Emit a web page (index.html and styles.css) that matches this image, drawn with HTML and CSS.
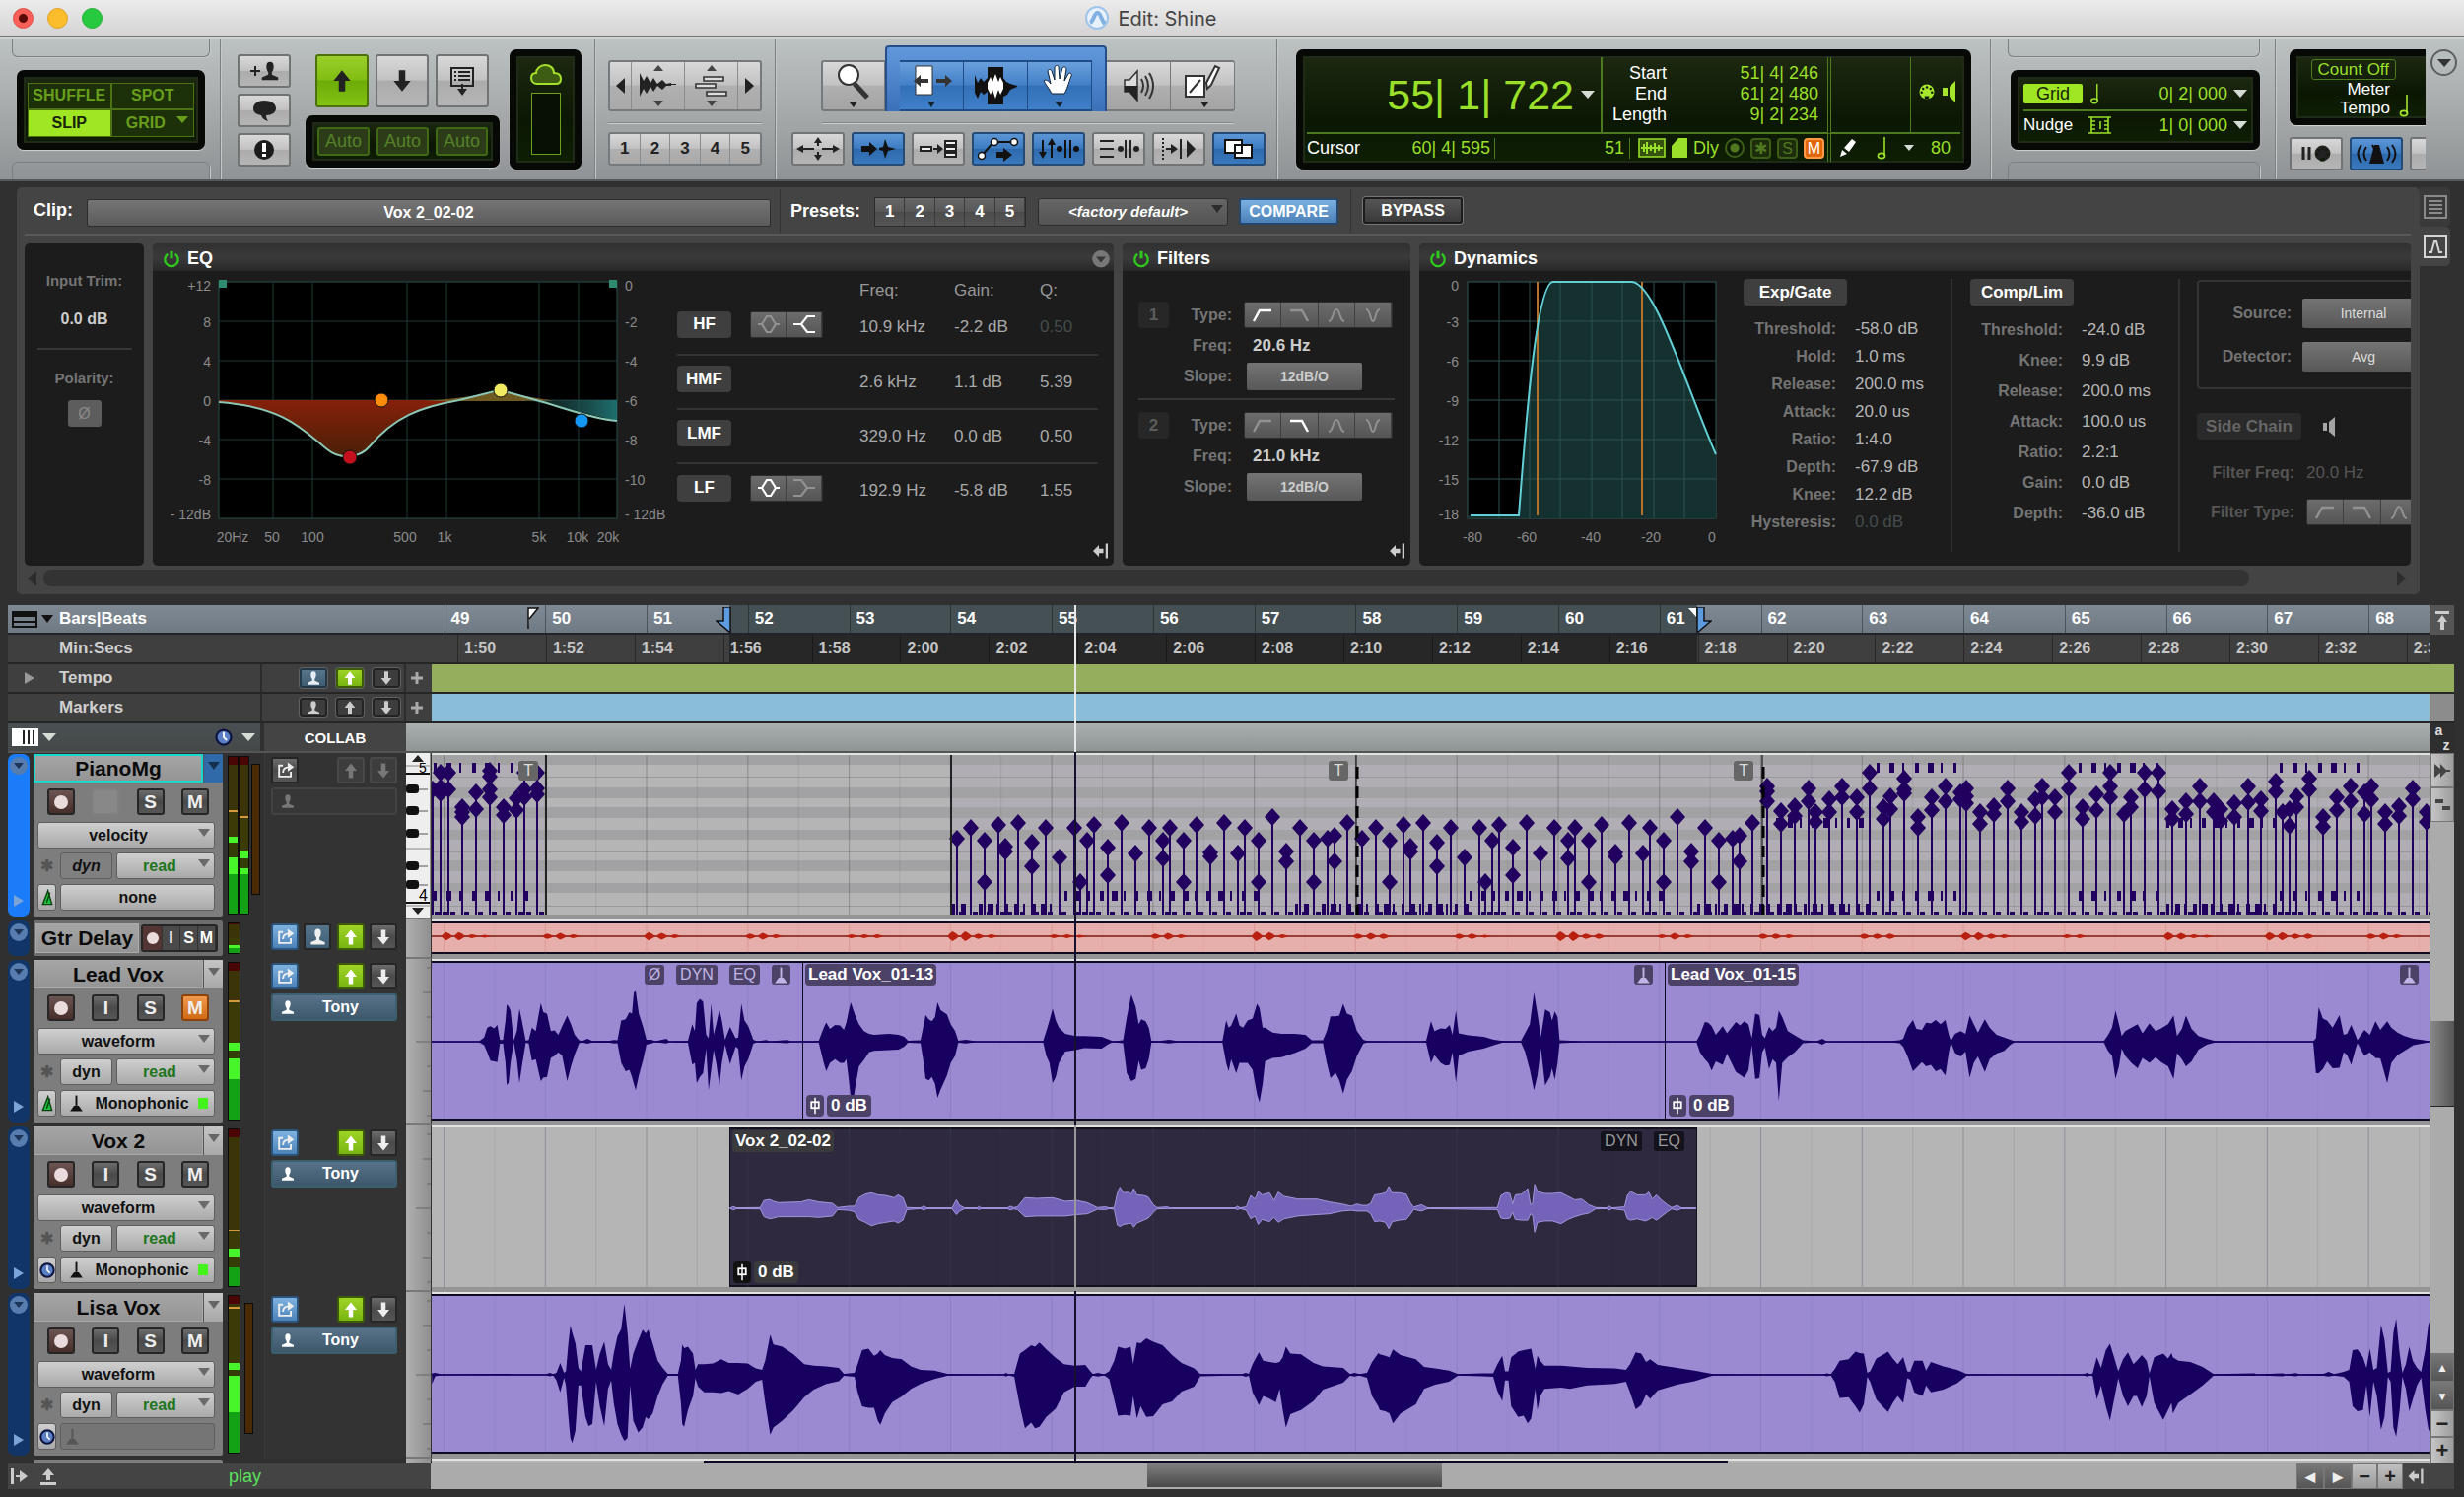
FILE: index.html
```
<!DOCTYPE html>
<html lang="en">
<head>
  <meta charset="UTF-8">
  <meta name="viewport" content="width=device-width, initial-scale=1.0">
  <title>Edit: Shine</title>
  <link rel="stylesheet" href="styles.css">
</head>
<body>
  <!-- shared icons -->
  <svg class="sprite" aria-hidden="true">
    <symbol id="i-person" viewBox="0 0 24 24"><path fill="currentColor" d="M12 2c3 0 4 2 4 5 0 3-1 5-2 6v3l7 3v3H3v-3l7-3v-3c-1-1-2-3-2-6 0-3 1-5 4-5z"/></symbol>
    <symbol id="i-up" viewBox="0 0 24 24"><path fill="currentColor" d="M12 2l8 10h-5v10H9V12H4z"/></symbol>
    <symbol id="i-down" viewBox="0 0 24 24"><path fill="currentColor" d="M12 22l8-10h-5V2H9v10H4z"/></symbol>
    <symbol id="i-share" viewBox="0 0 24 24"><path fill="none" stroke="currentColor" stroke-width="2.4" d="M9 6H4v14h15v-6M9 15c0-5 3-7 8-7"/><path fill="currentColor" d="M15 2l8 6-8 6z"/></symbol>
    <symbol id="i-metro" viewBox="0 0 24 24"><path stroke="currentColor" stroke-width="2.4" d="M12 2v13"/><path fill="currentColor" d="M4 22l5-7h6l5 7z"/></symbol>
    <symbol id="i-clock" viewBox="0 0 24 24"><circle cx="12" cy="12" r="10" fill="#5b7fc4" stroke="#0d1440" stroke-width="3"/><path fill="none" stroke="#fff" stroke-width="2.4" d="M12 5v7l4 4"/></symbol>
    <symbol id="i-tri" viewBox="0 0 24 24"><path fill="#19c23a" stroke="#0b3d14" stroke-width="2" d="M13 1L5 22h14z"/><path stroke="#0b3d14" stroke-width="2" d="M16 4l-5 15"/></symbol>
    <symbol id="i-power" viewBox="0 0 24 24"><path fill="none" stroke="currentColor" stroke-width="3" d="M7 5a9 9 0 1 0 10 0"/><path stroke="currentColor" stroke-width="4" d="M12 1v10"/></symbol>
    <symbol id="i-fader" viewBox="0 0 24 24"><path stroke="currentColor" stroke-width="2" d="M12 1v22"/><rect x="7" y="7" width="10" height="8" fill="none" stroke="currentColor" stroke-width="2.4"/></symbol>
    <symbol id="i-collapse" viewBox="0 0 24 24"><path fill="currentColor" d="M2 12l8-8v5h6v6h-6v5zM19 2h3v20h-3z"/></symbol>
    <symbol id="i-hp" viewBox="0 0 24 16"><path fill="none" stroke="currentColor" stroke-width="2.4" d="M3 14L9 3h12"/></symbol>
    <symbol id="i-lp" viewBox="0 0 24 16"><path fill="none" stroke="currentColor" stroke-width="2.4" d="M3 3h12l6 11"/></symbol>
    <symbol id="i-peak" viewBox="0 0 24 16"><path fill="none" stroke="currentColor" stroke-width="2" d="M4 14c5 0 4-12 8-12s3 12 8 12"/></symbol>
    <symbol id="i-notch" viewBox="0 0 24 16"><path fill="none" stroke="currentColor" stroke-width="2" d="M5 2c5 0 4 12 7 12s2-12 7-12"/></symbol>
    <symbol id="i-bell" viewBox="0 0 24 20"><path fill="none" stroke="currentColor" stroke-width="2.2" d="M1 10h4l5-8h4l5 8h4M5 10l5 8h4l5-8"/></symbol>
    <symbol id="i-shelfr" viewBox="0 0 24 20"><path fill="none" stroke="currentColor" stroke-width="2.2" d="M1 10h8l6-8h8M9 10l6 8h8"/></symbol>
    <symbol id="i-shelfl" viewBox="0 0 24 20"><path fill="none" stroke="currentColor" stroke-width="2.2" d="M1 2h8l6 8h8M1 18h8l6-8"/></symbol>
    <symbol id="i-note" viewBox="0 0 12 24"><path stroke="currentColor" stroke-width="1.6" d="M9 1v19"/><ellipse cx="6" cy="20" rx="3.6" ry="2.6" fill="none" stroke="currentColor" stroke-width="1.6"/></symbol>
    <symbol id="i-midi" viewBox="0 0 24 24"><circle cx="12" cy="12" r="10" fill="currentColor"/><g fill="#101a08"><circle cx="12" cy="6" r="1.6"/><circle cx="7" cy="8" r="1.6"/><circle cx="17" cy="8" r="1.6"/><circle cx="5" cy="13" r="1.6"/><circle cx="19" cy="13" r="1.6"/><rect x="9" y="18" width="6" height="4"/></g></symbol>
  </svg>

  <div class="window">
    <header class="titlebar">
      <div class="lights">
        <button class="light red" aria-label="Close"></button>
        <button class="light yellow" aria-label="Minimize"></button>
        <button class="light green" aria-label="Zoom"></button>
      </div>
      <h1 class="title">
        <svg width="25" height="25" viewBox="0 0 25 25"><circle cx="12" cy="12" r="11" fill="#e8f1fb" stroke="#9fc4ea" stroke-width="2"/><path d="M5 17c4-2 4-10 7.500-10S16 14 20 18" fill="none" stroke="#7fb0e0" stroke-width="4"/></svg>
        Edit: Shine
      </h1>
    </header>

    <div class="toolbar">
      <!-- edit modes -->
      <section class="section modes">
        <div class="tab tab-top"></div>
        <div class="lcd mode-lcd">
          <button>SHUFFLE</button><button>SPOT</button>
          <button class="on">SLIP</button><button>GRID<i class="caret"></i></button>
        </div>
        <div class="tab tab-bottom"></div>
      </section>

      <!-- collaboration -->
      <section class="section cloud">
        <div class="stack">
          <button class="tool" aria-label="Invite"><svg width="34" height="24" viewBox="0 0 34 24"><path stroke="#222" stroke-width="2" d="M3 12h10M8 7v10"/><use href="#i-person" x="12" width="22" height="24"/></svg></button>
          <button class="tool" aria-label="Chat"><svg width="28" height="24" viewBox="0 0 28 24"><path fill="#222" d="M14 2c7 0 12 3 12 8 0 4-4 7-10 7 0 3 1 4 2 6-4-1-6-3-7-6-5-1-8-3-8-7 0-5 5-8 11-8z"/></svg></button>
          <button class="tool" aria-label="Alerts"><svg width="24" height="24" viewBox="0 0 24 24"><circle cx="12" cy="12" r="10" fill="#1b1b1b"/><path stroke="#fff" stroke-width="4" d="M12 5v9M12 16v3"/></svg></button>
        </div>
        <div class="transfer">
          <div class="transfer-row">
            <button class="tool lime" aria-label="Upload"><svg width="26" height="28"><use href="#i-up"/></svg></button>
            <button class="tool" aria-label="Download"><svg width="26" height="28"><use href="#i-down"/></svg></button>
            <button class="tool" aria-label="Download tracks"><svg width="26" height="30" viewBox="0 0 26 30"><rect x="2" y="2" width="22" height="18" fill="none" stroke="#222" stroke-width="2"/><path stroke="#222" stroke-width="2" d="M5 6h2M9 6h12M5 10h2M9 10h12M5 14h2M9 14h12M13 18v7"/><path fill="#222" d="M8 23h10l-5 7z"/></svg></button>
          </div>
          <div class="lcd auto-lcd"><button>Auto</button><button>Auto</button><button>Auto</button></div>
        </div>
        <div class="lcd cloud-lcd">
          <svg width="32" height="22" viewBox="0 0 32 22"><path fill="#3d5d12" stroke="#a6e02c" stroke-width="2" d="M7 20c-4 0-6-3-6-6s2-5 5-5c0-4 4-8 9-8s9 3 9 8c4 0 7 2 7 6 0 3-2 5-5 5z"/></svg>
          <div class="cloud-meter"></div>
        </div>
      </section>

      <!-- zoom -->
      <section class="section zoom">
        <div class="button-bar tall zoom-bar">
          <button aria-label="Zoom out"><i class="arrow-l"></i></button>
          <button aria-label="Audio zoom"><svg width="44" height="46" viewBox="0 0 44 46"><path fill="#444" d="M22 2l5 6H17zM22 44l5-6H17z"/><path fill="#222" d="M3 10l4 8 3-5 4 7 3-5 4 6 5-4 4 4 5-1v1h5v1h-5v1h-5l-4 4-5-4-4 6-3-5-4 7-3-5-4 8z"/></svg></button>
          <button aria-label="MIDI zoom"><svg width="44" height="46" viewBox="0 0 44 46"><path fill="#444" d="M22 2l5 6H17zM22 44l5-6H17z"/><path fill="#ddd" stroke="#333" stroke-width="1.600" d="M14 14h20v4H14zM6 21h20v4H6zM17 29h20v4H17z"/></svg></button>
          <button aria-label="Zoom in"><i class="arrow-r"></i></button>
        </div>
        <div class="groove"></div>
        <div class="button-bar presets">
          <button>1</button><button>2</button><button>3</button><button>4</button><button>5</button>
        </div>
      </section>

      <!-- tools -->
      <section class="section tools">
        <div class="tool-row">
          <button class="cell first" aria-label="Zoomer"><svg width="38" height="46" viewBox="0 0 38 46"><path stroke="#333" stroke-width="5" d="M20 21l13 14"/><circle cx="14" cy="12" r="10" fill="#fff" stroke="#333" stroke-width="2"/><path fill="#222" d="M14 39h9l-4 6z"/></svg></button>
          <div class="smart">
            <button class="cell blue" aria-label="Trim"><svg width="42" height="46" viewBox="0 0 42 46"><path fill="#fff" stroke="#333" d="M5 3h17v29H5z"/><path fill="#333" d="M3 18l7-6v4h8v4h-8v4zM42 18l-7-6v4h-9v4h9v4z"/><path fill="#123" d="M17 39h8l-4 6z"/></svg></button>
            <button class="cell blue" aria-label="Selector"><svg width="46" height="46" viewBox="0 0 46 46"><path fill="#111" d="M15 4h16v38H15zM2 12l3 8 3-5 3 4 4-4v14l-4 3-3-3-3 7-3-6zM31 15l3 4 4 2 7 2v1l-7 3-3 5-4 2z"/><path fill="#fff" d="M15 20l3-6 2 5 3-8 3 8 2-5 3 6v6l-3 6-2-5-3 9-3-9-2 5-3-6z"/></svg></button>
            <button class="cell blue" aria-label="Grabber"><svg width="38" height="46" viewBox="0 0 38 46"><path fill="#fff" stroke="#123" d="M11 31c-3-6-6-9-8-13 2-2 5 0 7 3L7 8c1-2 3-2 4 0l3 9V4c1-2 4-2 4 0l1 12 3-11c1-2 4-1 4 1l-2 12 4-7c2-2 4 0 3 2-3 8-4 13-7 18z"/><path fill="#123" d="M14 39h9l-4 6z"/></svg></button>
          </div>
          <button class="cell" aria-label="Scrubber"><svg width="34" height="40" viewBox="0 0 34 40"><path fill="#ddd" stroke="#333" stroke-width="1.500" d="M3 14h5l8-9v30l-8-9H3z"/><path fill="#222" d="M3 20h13v15l-8-9H3z"/><path fill="none" stroke="#333" stroke-width="2" d="M20 13q4 7 0 14M24 10q6 10 0 20M28 7q8 13 0 26"/></svg></button>
          <button class="cell last" aria-label="Pencil"><svg width="42" height="46" viewBox="0 0 42 46"><path fill="#fff" stroke="#333" stroke-width="2" d="M4 13h19v21H4zM8 30l11-13"/><path fill="#fff" stroke="#333" stroke-width="2" d="M26 26l-1-6 9-17 4 2-8 17z"/><path fill="#222" d="M19 39h9l-5 6z"/></svg></button>
        </div>
        <div class="groove"></div>
        <div class="option-row">
          <button class="tool" aria-label="Zoom toggle"><svg width="46" height="24" viewBox="0 0 46 24"><path stroke="#222" stroke-width="2" d="M6 12h13M27 12h13M23 9V5M23 15v4"/><path fill="#222" d="M1 12l7-4v8zM45 12l-7-4v8zM23 0l4 6h-8zM23 24l4-6h-8z"/></svg></button>
          <button class="tool blue" aria-label="Tab to transient"><svg width="38" height="24" viewBox="0 0 38 24"><path fill="#111" d="M2 9h8V5l8 7-8 7v-4H2zM20 11l4-1 2-8 3 8 8 2-8 2-3 8-2-8-4-1z"/></svg></button>
          <button class="tool" aria-label="Mirrored editing"><svg width="40" height="24" viewBox="0 0 40 24"><path fill="#eee" stroke="#222" stroke-width="2" d="M2 10h11v4H2zM27 4h11v4H27zM27 10h11v4H27zM27 16h11v4H27z"/><path stroke="#222" stroke-width="2" d="M15 12h6"/><path fill="#222" d="M19 7l6 5-6 5z"/></svg></button>
          <button class="tool blue" aria-label="Automation follows edit"><svg width="44" height="26" viewBox="0 0 44 26"><path fill="none" stroke="#111" stroke-width="2" d="M5 20L17 6h22"/><g fill="#fff" stroke="#111" stroke-width="1.500"><circle cx="5" cy="20" r="3.500"/><circle cx="18" cy="6" r="3.500"/><circle cx="38" cy="6" r="3.500"/></g><path fill="#111" d="M20 16h7v-4l9 7-9 7v-4h-7z"/></svg></button>
          <button class="tool blue" aria-label="MIDI merge"><svg width="44" height="24" viewBox="0 0 44 24"><path stroke="#111" stroke-width="2" d="M6 3v14M15 7v14M29 3v18M34 3v18"/><path fill="#111" d="M6 22l-4-7h8zM15 1l-4 7h8z"/><circle cx="23" cy="12" r="3" fill="#111"/><circle cx="40" cy="12" r="3" fill="#111"/></svg></button>
          <button class="tool" aria-label="Link track"><svg width="44" height="24" viewBox="0 0 44 24"><path stroke="#222" stroke-width="2" d="M3 4h14M3 12h14M3 20h14M29 3v18M34 3v18"/><circle cx="24" cy="12" r="3" fill="#222"/><circle cx="40" cy="12" r="3" fill="#222"/></svg></button>
          <button class="tool" aria-label="Insertion follows playback"><svg width="40" height="24" viewBox="0 0 40 24"><path stroke="#222" stroke-width="2" stroke-dasharray="2 2" d="M4 1v22"/><path stroke="#222" stroke-width="2" d="M7 12h7M22 2v20"/><path fill="#222" d="M12 7l7 5-7 5zM28 3l9 9-9 9z"/></svg></button>
          <button class="tool blue" aria-label="Layered editing"><svg width="32" height="24" viewBox="0 0 32 24"><path fill="#fff" stroke="#111" stroke-width="2" d="M2 3h17v13H2zM12 8h17v13H12z"/></svg></button>
        </div>
      </section>

      <!-- main counter -->
      <section class="section counter">
        <div class="lcd counter-lcd">
          <div class="main-time">55| 1| 722<i class="caret white"></i></div>
          <dl class="range">
            <dt>Start</dt><dd>51| 4| 246</dd>
            <dt>End</dt><dd>61| 2| 480</dd>
            <dt>Length</dt><dd>9| 2| 234</dd>
          </dl>
          <div class="inputs">
            <div class="inputs-icons"><svg width="18" height="18"><use href="#i-midi"/></svg><svg width="16" height="24" viewBox="0 0 16 24"><path fill="currentColor" d="M1 8h5v8H1zM8 7l6-6v22l-6-6z"/></svg></div>
          </div>
          <div class="cursor-row">
            <span class="white">Cursor</span>
            <span class="cursor-pos">60| 4| 595</span>
            <span class="cursor-val">51</span>
            <span class="status">
              <svg width="28" height="20" viewBox="0 0 28 20"><path fill="#35520f" stroke="currentColor" stroke-width="1.600" d="M1 1h26v18H1z"/><path stroke="currentColor" stroke-width="2" d="M3 10h22M6 6v8M9 4v12M13 7v6M17 5v10M21 7v6"/></svg>
              <svg width="16" height="20" viewBox="0 0 16 20"><path fill="currentColor" d="M7 0h9v20H0V8z"/></svg>
              <span>Dly</span>
              <i class="dot-ring"></i><i class="chip">✱</i><i class="chip">S</i><i class="chip mute">M</i>
            </span>
          </div>
          <div class="note-row">
            <svg width="20" height="20" viewBox="0 0 20 20"><path fill="#fff" d="M1 19l2-7 5 4zM5 10L13 1l4 3-7 10z"/></svg>
            <svg width="12" height="24"><use href="#i-note"/></svg>
            <i class="caret white small"></i>
            <span>80</span>
          </div>
        </div>
      </section>

      <!-- grid and nudge -->
      <section class="section gridnudge">
        <div class="tab tab-top"></div>
        <div class="lcd grid-lcd">
          <div class="grid-line"><button class="grid-on">Grid</button><svg width="12" height="22"><use href="#i-note"/></svg><span>0| 2| 000</span><i class="caret white"></i></div>
          <div class="grid-line"><b>Nudge</b><svg width="23" height="18" viewBox="0 0 23 18"><path fill="none" stroke="currentColor" stroke-width="1.600" d="M0 1h23M0 17h23M3 1v16M20 1v16M3 5h4M3 9h4M3 13h4M16 5h4M16 9h4M16 13h4M12 5v8"/></svg><span>1| 0| 000</span><i class="caret white"></i></div>
        </div>
        <div class="tab tab-bottom"></div>
      </section>

      <section class="transport">
        <div class="lcd tempo-lcd">
          <span class="count">Count Off</span>
          <span>Meter</span>
          <span>Tempo</span>
          <svg class="tempo-note" width="14" height="24"><use href="#i-note"/></svg>
        </div>
        <div class="transport-row">
          <button class="tool" aria-label="Wait for note"><svg width="32" height="20" viewBox="0 0 32 20"><path stroke="#222" stroke-width="3" d="M3 3v13M9 3v13"/><use href="#i-midi" x="13" width="19" height="19"/></svg></button>
          <button class="tool blue" aria-label="Metronome"><svg width="42" height="24" viewBox="0 0 42 24"><path fill="#111" d="M19 3h5l5 19H14z"/><path fill="none" stroke="#111" stroke-width="2" d="M11 5q-5 7 0 14M6 3q-7 9 0 18M32 5q5 7 0 14M37 3q7 9 0 18M17 3l6 12"/></svg></button>
          <button class="tool" aria-label="Count off"></button>
        </div>
      </section>
      <button class="round" aria-label="Toolbar menu"><i class="caret"></i></button>
    </div>

    <!-- clip effects -->
    <div class="fx">
      <div class="fx-main">
        <div class="fx-top">
          <span class="fx-label">Clip:</span>
          <button class="clip-name">Vox 2_02-02</button>
          <div class="fx-presets">
            <span class="fx-label">Presets:</span>
            <div class="fx-numbers"><button>1</button><button>2</button><button>3</button><button>4</button><button>5</button></div>
            <label class="drop fx-drop"><select aria-label="Preset"><option>&lt;factory default&gt;</option></select></label>
            <button class="compare">COMPARE</button>
          </div>
          <button class="bypass">BYPASS</button>
        </div>

        <div class="fx-panels">
          <section class="panel trim">
            <span class="dim">Input Trim:</span>
            <b>0.0 dB</b>
            <hr>
            <span class="dim">Polarity:</span>
            <button class="polarity">Ø</button>
          </section>

          <section class="panel eq">
            <h2><svg width="18" height="18"><use href="#i-power"/></svg>EQ<i class="round-mini"></i></h2>
            <div class="eq-body">
              <svg class="eq-graph" id="eqGraph" width="520" height="286" viewBox="0 0 520 286"></svg>
              <table class="bands">
                <thead><tr><th></th><th></th><th>Freq:</th><th>Gain:</th><th>Q:</th></tr></thead>
                <tbody>
                  <tr><td><button class="band">HF</button></td><td><div class="shape"><button aria-label="Bell"><svg width="24" height="20"><use href="#i-bell"/></svg></button><button class="on" aria-label="Shelf"><svg width="24" height="20"><use href="#i-shelfr"/></svg></button></div></td><td>10.9 kHz</td><td>-2.2 dB</td><td class="off">0.50</td></tr>
                  <tr><td><button class="band">HMF</button></td><td></td><td>2.6 kHz</td><td>1.1 dB</td><td>5.39</td></tr>
                  <tr><td><button class="band">LMF</button></td><td></td><td>329.0 Hz</td><td>0.0 dB</td><td>0.50</td></tr>
                  <tr><td><button class="band">LF</button></td><td><div class="shape"><button class="on" aria-label="Bell"><svg width="24" height="20"><use href="#i-bell"/></svg></button><button aria-label="Shelf"><svg width="24" height="20"><use href="#i-shelfl"/></svg></button></div></td><td>192.9 Hz</td><td>-5.8 dB</td><td>1.55</td></tr>
                </tbody>
              </table>
            </div>
            <svg class="collapse" width="19" height="18"><use href="#i-collapse"/></svg>
          </section>

          <section class="panel filters">
            <h2><svg width="18" height="18"><use href="#i-power"/></svg>Filters</h2>
            <div class="filter">
              <button class="num">1</button>
              <span class="dim">Type:</span>
              <div class="shape four"><button class="on" aria-label="High pass"><svg width="24" height="16"><use href="#i-hp"/></svg></button><button aria-label="Low pass"><svg width="24" height="16"><use href="#i-lp"/></svg></button><button aria-label="Peak"><svg width="24" height="16"><use href="#i-peak"/></svg></button><button aria-label="Notch"><svg width="24" height="16"><use href="#i-notch"/></svg></button></div>
              <span class="dim">Freq:</span><b>20.6 Hz</b>
              <span class="dim">Slope:</span><button class="slope">12dB/O</button>
            </div>
            <div class="filter">
              <button class="num">2</button>
              <span class="dim">Type:</span>
              <div class="shape four"><button aria-label="High pass"><svg width="24" height="16"><use href="#i-hp"/></svg></button><button class="on" aria-label="Low pass"><svg width="24" height="16"><use href="#i-lp"/></svg></button><button aria-label="Peak"><svg width="24" height="16"><use href="#i-peak"/></svg></button><button aria-label="Notch"><svg width="24" height="16"><use href="#i-notch"/></svg></button></div>
              <span class="dim">Freq:</span><b>21.0 kHz</b>
              <span class="dim">Slope:</span><button class="slope">12dB/O</button>
            </div>
            <svg class="collapse" width="19" height="18"><use href="#i-collapse"/></svg>
          </section>

          <section class="panel dynamics">
            <h2><svg width="18" height="18"><use href="#i-power"/></svg>Dynamics</h2>
            <div class="dyn-body">
              <svg class="dyn-graph" id="dynGraph" width="310" height="286" viewBox="0 0 310 286"></svg>
              <div class="dyn-col">
                <button class="band wide">Exp/Gate</button>
                <dl class="params">
                  <dt>Threshold:</dt><dd>-58.0 dB</dd><dt>Hold:</dt><dd>1.0 ms</dd>
                  <dt>Release:</dt><dd>200.0 ms</dd><dt>Attack:</dt><dd>20.0 us</dd>
                  <dt>Ratio:</dt><dd>1:4.0</dd><dt>Depth:</dt><dd>-67.9 dB</dd>
                  <dt>Knee:</dt><dd>12.2 dB</dd><dt>Hysteresis:</dt><dd class="off">0.0 dB</dd>
                </dl>
              </div>
              <div class="dyn-col">
                <button class="band wide">Comp/Lim</button>
                <dl class="params loose">
                  <dt>Threshold:</dt><dd>-24.0 dB</dd><dt>Knee:</dt><dd>9.9 dB</dd>
                  <dt>Release:</dt><dd>200.0 ms</dd><dt>Attack:</dt><dd>100.0 us</dd>
                  <dt>Ratio:</dt><dd>2.2:1</dd><dt>Gain:</dt><dd>0.0 dB</dd>
                  <dt>Depth:</dt><dd>-36.0 dB</dd>
                </dl>
              </div>
              <div class="side-chain">
                <div class="source">
                  <span class="dim">Source:</span><button class="slope">Internal</button>
                  <span class="dim">Detector:</span><button class="slope">Avg</button>
                </div>
                <div class="chain-line"><button class="chain">Side Chain</button><svg width="16" height="20" viewBox="0 0 16 20"><path fill="#a5a5a5" d="M1 6h4v8H1zM7 5l6-5v20l-6-5z"/></svg></div>
                <div class="chain-grid">
                  <span class="faint">Filter Freq:</span><span class="faint val">20.0 Hz</span>
                  <span class="faint">Filter Type:</span>
                  <div class="shape four"><button aria-label="High pass"><svg width="24" height="16"><use href="#i-hp"/></svg></button><button aria-label="Low pass"><svg width="24" height="16"><use href="#i-lp"/></svg></button><button aria-label="Peak"><svg width="24" height="16"><use href="#i-peak"/></svg></button><button aria-label="Notch"><svg width="24" height="16"><use href="#i-notch"/></svg></button></div>
                </div>
              </div>
            </div>
          </section>
        </div>
        <div class="fx-scroll"><i class="arrow-l"></i><div class="fx-track"><div class="fx-thumb"></div></div><i class="arrow-r"></i></div>
      </div>
      <div class="fx-tabs">
        <button aria-label="List view"><svg width="24" height="24" viewBox="0 0 24 24"><path fill="none" stroke="#8a8a8a" stroke-width="2" d="M1 1h22v22H1zM5 6h14M5 10h14M5 14h14M5 18h14"/></svg></button>
        <button class="on" aria-label="Graph view"><svg width="24" height="24" viewBox="0 0 24 24"><path fill="none" stroke="#d5d5d5" stroke-width="2" d="M1 1h22v22H1zM5 18h3l3-11h2l3 11h3"/></svg></button>
      </div>
    </div>

    <!-- edit window -->
    <main class="edit">
      <div class="edit-main">
        <div class="ruler bars">
          <div class="ruler-name"><svg width="26" height="17" viewBox="0 0 26 17"><path fill="none" stroke="#111" stroke-width="2" d="M1 1h24v15H1zM1 11h24"/><path fill="#111" d="M1 1h24v5H1z"/></svg><i class="caret black"></i><span>Bars|Beats</span></div>
          <div class="ruler-line" id="barRuler"></div>
        </div>
        <div class="ruler secs">
          <div class="ruler-name"><span>Min:Secs</span></div>
          <div class="ruler-line" id="timeRuler"></div>
        </div>
        <div class="ruler lined">
          <div class="ruler-name"><i class="arrow-r gray"></i><span>Tempo</span></div>
          <div class="ruler-collab">
            <button class="mini steel" aria-label="Owner"><svg width="18" height="16"><use href="#i-person"/></svg></button>
            <button class="mini lime" aria-label="Upload"><svg width="18" height="16"><use href="#i-up"/></svg></button>
            <button class="mini" aria-label="Download"><svg width="18" height="16"><use href="#i-down"/></svg></button>
          </div>
          <button class="plus" aria-label="Add tempo"><svg width="12" height="12" viewBox="0 0 12 12"><path stroke="currentColor" stroke-width="3" d="M6 0v12M0 6h12"/></svg></button>
          <div class="ruler-line tempo"></div>
        </div>
        <div class="ruler lined">
          <div class="ruler-name"><span>Markers</span></div>
          <div class="ruler-collab">
            <button class="mini" aria-label="Owner"><svg width="18" height="16"><use href="#i-person"/></svg></button>
            <button class="mini" aria-label="Upload"><svg width="18" height="16"><use href="#i-up"/></svg></button>
            <button class="mini" aria-label="Download"><svg width="18" height="16"><use href="#i-down"/></svg></button>
          </div>
          <button class="plus" aria-label="Add marker"><svg width="12" height="12" viewBox="0 0 12 12"><path stroke="currentColor" stroke-width="3" d="M6 0v12M0 6h12"/></svg></button>
          <div class="ruler-line markers"></div>
        </div>
        <div class="ruler heads">
          <div class="ruler-name"><svg width="27" height="18" viewBox="0 0 27 18"><path fill="#fff" d="M0 0h27v18H0z"/><path stroke="#222" stroke-width="2" d="M12 2v14M17 2v14M22 2v14"/></svg><i class="caret white"></i><span class="grow"></span><svg width="18" height="18"><use href="#i-clock"/></svg><i class="caret white"></i></div>
          <div class="collab-head">COLLAB</div>
          <div class="ruler-line" id="headLine"></div>
        </div>
        <div class="tracks" id="tracks"></div>
        <div class="overlay"><div class="playhead" id="playhead"></div></div>
      </div>

      <aside class="side">
        <div class="side-top"><svg width="20" height="22" viewBox="0 0 20 22"><path fill="#ccc" d="M3 1h14v3H3zM10 5l5 7h-3v8H8v-8H5z"/></svg></div>
        <div class="side-gap"></div>
        <div class="side-tempo"></div>
        <div class="side-markers"></div>
        <button class="az"><span>a</span><span>z</span></button>
        <button class="side-btn" aria-label="Audio zoom"><svg width="18" height="18" viewBox="0 0 18 18"><path fill="#444" d="M1 2l6 5V2l6 6h4v2h-4l-6 6v-5l-6 5z"/></svg></button>
        <button class="side-btn" aria-label="MIDI zoom"><svg width="18" height="18" viewBox="0 0 18 18"><path fill="#444" d="M2 3h8v4H2zM9 10h8v4H9z"/></svg></button>
        <div class="v-scroll"><div class="v-thumb"></div></div>
        <button class="side-btn dark" aria-label="Scroll up">▲</button>
        <button class="side-btn dark" aria-label="Scroll down">▼</button>
        <button class="side-btn pm">−</button>
        <button class="side-btn pm">+</button>
      </aside>
    </main>

    <footer class="bottom">
      <div class="bottom-left">
        <svg width="17" height="16" viewBox="0 0 17 16"><path fill="#ccc" d="M0 0h3v16H0zM5 7h4V2l8 6-8 6V9H5z"/></svg>
        <svg width="16" height="17" viewBox="0 0 16 17"><path fill="#ccc" d="M8 0l6 7h-4v5H6V7H2zM0 14h16v3H0z"/></svg>
        <span class="play">play</span>
      </div>
      <div class="h-scroll"><div class="h-thumb"></div></div>
      <div class="h-buttons">
        <button class="dark" aria-label="Scroll left">◀</button><button class="dark" aria-label="Scroll right">▶</button><button>−</button><button>+</button>
        <svg width="18" height="18"><use href="#i-collapse"/></svg>
      </div>
    </footer>
  </div>
  <script src="script.js"></script>
</body>
</html>
```

FILE: styles.css
```
* {
  box-sizing: border-box;
}
body {
  margin: 0;
  background: #303030;
  color: #ddd;
  font-family: "Liberation Sans", Arial, sans-serif;
  font-size: 16px;
}
button, select {
  font: inherit;
  color: inherit;
  margin: 0;
  padding: 0;
  border: none;
  background: none;
  cursor: pointer;
}
button {
  display: flex;
  align-items: center;
  justify-content: center;
}
svg {
  display: block;
  flex: none;
}
h1, h2, dl, dd {
  margin: 0;
}
.sprite {
  position: absolute;
  width: 0;
  height: 0;
}
.window {
  display: flex;
  flex-direction: column;
  min-height: 100vh;
  background: #303030;
}
/* Triangles */
.caret {
  flex: none;
  border: 7px solid transparent;
  border-top: 8px solid #79b31a;
  border-bottom: none;
}
.caret.white { border-top-color: #d5dcd5; }
.caret.black { border-top-color: #111; }
.caret.small { border-width: 6px 5px 0; }
.arrow-l, .arrow-r {
  flex: none;
  border: 8px solid transparent;
}
.arrow-l { border-right: 9px solid #222; border-left: none; }
.arrow-r { border-left: 9px solid #222; border-right: none; }
.arrow-r.gray { border-width: 6px 0 6px 10px; border-left-color: #999; }

/* Title bar */
.titlebar {
  position: relative;
  display: flex;
  align-items: center;
  justify-content: center;
  height: 38px;
  background: linear-gradient(#ececec, #d3d3d3);
  border-bottom: 1px solid #777;
}
.lights {
  position: absolute;
  left: 13px;
  top: 8px;
  display: flex;
  gap: 14px;
}
.light {
  width: 21px;
  height: 21px;
  border-radius: 50%;
}
.light.red { background: radial-gradient(#5c0b06 0 4px, #fb5f57 5px); border: 1px solid #dd4b44; }
.light.yellow { background: #fcbd2d; border: 1px solid #dfa023; }
.light.green { background: #27c93f; border: 1px solid #1faf34; }
.title {
  display: flex;
  align-items: center;
  gap: 8px;
  padding-right: 164px;
  font: 20px Inter, sans-serif;
  color: #444;
}

/* Toolbar */
.toolbar {
  display: flex;
  height: 146px;
  background: linear-gradient(#bcc1c1, #a9adae 45%, #8f9395);
  border-top: 2px solid #cdd1d2;
  border-bottom: 2px solid #55585c;
  overflow: hidden;
}
.section {
  flex: none;
  border-right: 1px solid #7b8082;
  box-shadow: 1px 0 #c4c8c9;
}
.lcd {
  background: linear-gradient(#1c280f, #0b1703 60%, #0e1f04);
  border: 7px solid #070907;
  border-radius: 7px;
  box-shadow: inset 0 0 0 2px #1f2a17, 0 1px 1px #d0d4d4;
  color: #9adf2a;
}
.tool {
  width: 54px;
  height: 34px;
  background: linear-gradient(#d8d8d8, #c2c2c2 48%, #acacac 50%, #b5b5b5);
  border: 2px solid #717375;
  border-radius: 3px;
  color: #222;
}
.tool.lime { background: linear-gradient(#9bce2b, #80bd12 48%, #6dab07 50%, #82c313); border-color: #4c720e; color: #222; }
.tool.blue { background: linear-gradient(#5c96d6, #3d7cc2 48%, #2d69ad 50%, #3a79bd); border-color: #244a75; }
.groove {
  height: 2px;
  margin: 11px 0 8px;
  background: #83888a;
  border-bottom: 1px solid #c9cdce;
}
.modes {
  display: flex;
  flex-direction: column;
  justify-content: space-between;
  width: 224px;
  padding: 0 10px 0 12px;
}
.tab {
  height: 18px;
  border: 1px solid #7b8082;
  box-shadow: 1px 1px #c4c8c9;
}
.tab-top { border-top: none; border-radius: 0 0 6px 6px; }
.tab-bottom { border-bottom: none; border-radius: 6px 6px 0 0; }
.mode-lcd {
  display: grid;
  grid-template-columns: 1fr 1fr;
  height: 81px;
  margin: 0 5px;
  padding: 6px 4px;
  font-weight: bold;
}
.mode-lcd button {
  position: relative;
  border: 1px solid #4c7213;
  background: #1c3009;
  color: #699e1d;
}
.mode-lcd button:last-child { padding-right: 14px; }
.mode-lcd .on { background: #a0e622; color: #17240a; }
.mode-lcd .caret {
  position: absolute;
  right: 5px;
  top: 6px;
  border-width: 7px 6px 0;
  border-top-color: #699e1d;
}
.cloud {
  display: flex;
  align-items: flex-start;
  width: 380px;
  padding: 10px 0 0 17px;
}
.stack {
  display: flex;
  flex-direction: column;
  gap: 6px;
  padding-top: 5px;
  margin-right: 15px;
}
.transfer-row {
  display: flex;
  gap: 7px;
  padding: 5px 10px 8px;
}
.transfer-row .tool { height: 54px; }
.auto-lcd {
  display: flex;
  gap: 7px;
  height: 53px;
  width: 197px;
  padding: 5px;
}
.auto-lcd button {
  flex: 1;
  background: #2c3c19;
  border: 2px solid #3f6a13;
  border-radius: 3px;
  color: #56812a;
  font-size: 18px;
}
.cloud-lcd {
  display: flex;
  flex-direction: column;
  align-items: center;
  gap: 7px;
  width: 73px;
  height: 122px;
  margin-left: 10px;
  padding: 8px;
}
.cloud-meter {
  width: 30px;
  flex: 1;
  border: 1px solid #6fa01c;
  background: #071003;
}
.zoom {
  width: 183px;
  padding: 21px 13px 0;
}
.button-bar {
  display: flex;
  background: linear-gradient(#d8d8d8, #c2c2c2 48%, #b0b0b0 50%, #a9a9a9);
  border: 2px solid #777a7c;
  border-radius: 3px;
}
.button-bar button {
  flex: 1;
  border-right: 1px solid #8b8e90;
  color: #222;
}
.button-bar button:last-child { border-right: none; }
.tall { height: 52px; }
.zoom-bar button:first-child, .zoom-bar button:last-child { flex: 0 0 22px; }
.presets {
  height: 34px;
  font-size: 17px;
  font-weight: bold;
}
.tools {
  display: flex;
  flex-direction: column;
  align-items: center;
  width: 509px;
  padding: 21px 0 0 4px;
}
.tools .groove { width: 418px; }
.tool-row, .option-row {
  display: flex;
}
.option-row { gap: 7px; }
.cell {
  width: 65px;
  height: 52px;
  background: linear-gradient(#d8d8d8, #c2c2c2 48%, #b0b0b0 50%, #a3a3a3);
  border: solid #777a7c;
  border-width: 2px 1px 2px 0;
}
.cell.first { border-left-width: 2px; border-radius: 3px 0 0 3px; }
.cell.last { border-radius: 0 3px 3px 0; }
.cell.blue {
  background: linear-gradient(#6aa0dc, #4380c8 48%, #326fb6 50%, #4080c8);
  border-color: #1f4c86;
}
.smart {
  display: flex;
  margin-top: -15px;
  padding: 13px 13px 0;
  background: linear-gradient(#6298db, #3a70b8);
  border: solid #27508a;
  border-width: 2px 2px 0;
  border-radius: 4px 4px 0 0;
}
.counter {
  flex: 1;
  padding: 10px 19px 0;
}
.counter-lcd {
  display: grid;
  grid-template: 78px 28px / 1fr 232px 131px;
  height: 122px;
  padding: 1px 4px;
  font-size: 18px;
}
.main-time {
  display: flex;
  align-items: center;
  justify-content: flex-end;
  gap: 7px;
  padding-right: 6px;
  border-right: 2px solid #4d7a1e;
  border-bottom: 2px solid #4d7a1e;
  font-size: 43px;
}
.main-time .caret { border-width: 8px 7px 0; }
.range {
  display: grid;
  grid-template-columns: 65px 1fr;
  grid-auto-rows: 21px;
  padding: 6px 9px 0 0;
  text-align: right;
  line-height: 21px;
  border-right: 4px double #4d7a1e;
  border-bottom: 2px solid #4d7a1e;
}
.range dt, .white {
  color: #fff;
}
.inputs {
  display: flex;
  justify-content: flex-end;
  border-bottom: 2px solid #4d7a1e;
}
.inputs-icons {
  display: flex;
  align-items: center;
  gap: 6px;
  padding: 0 3px 6px 7px;
  border-left: 1px solid #4d7a1e;
  color: #a6e62c;
}
.cursor-row {
  grid-column: 1 / 3;
  display: flex;
  align-items: center;
  border-right: 4px double #4d7a1e;
}
.cursor-pos {
  flex: 1;
  padding-right: 4px;
  border-right: 1px solid #4d7a1e;
  text-align: right;
}
.cursor-val {
  width: 137px;
  padding-right: 5px;
  border-right: 1px solid #4d7a1e;
  text-align: right;
}
.status {
  display: flex;
  align-items: center;
  gap: 6px;
  width: 200px;
  padding-left: 8px;
}
.dot-ring {
  width: 20px;
  height: 20px;
  border: 2px solid #3d5e17;
  border-radius: 50%;
  background: radial-gradient(#50781f 0 4px, transparent 5px);
}
.chip {
  width: 21px;
  height: 21px;
  border: 2px solid #3d5e17;
  border-radius: 4px;
  background: #1d2d0c;
  color: #507822;
  font-size: 16px;
  font-style: normal;
  line-height: 17px;
  text-align: center;
}
.chip.mute { background: #e2660a; border-color: #ff9a45; color: #fff; }
.note-row {
  display: flex;
  align-items: center;
  justify-content: space-between;
  padding: 0 10px 0 8px;
}
.gridnudge {
  display: flex;
  flex-direction: column;
  justify-content: space-between;
  width: 289px;
  padding: 0 15px 0 17px;
}
.grid-lcd {
  height: 81px;
  margin: 0 0 0 3px;
  padding: 2px 6px;
  font-size: 18px;
}
.grid-line {
  display: flex;
  align-items: center;
  gap: 6px;
  height: 31px;
}
.grid-line + .grid-line { border-top: 2px solid #4d7a1e; }
.grid-line span { flex: 1; text-align: right; }
.grid-line b { width: 60px; color: #fff; font-size: 17px; font-weight: normal; }
.grid-on {
  width: 60px;
  height: 20px;
  border-radius: 2px;
  background: #a0e622;
  color: #17240a;
}
.transport {
  flex: none;
  width: 152px;
  padding: 10px 0 0 14px;
  overflow: hidden;
}
.tempo-lcd {
  position: relative;
  display: flex;
  flex-direction: column;
  align-items: flex-end;
  width: 150px;
  height: 77px;
  padding: 3px 41px 0 0;
  color: #fff;
  font-size: 17px;
  line-height: 19px;
}
.count {
  margin-right: -6px;
  padding: 0 6px;
  border: 1px solid #4d7a1e;
  border-radius: 3px;
  color: #9adf2a;
}
.tempo-note {
  position: absolute;
  right: 20px;
  bottom: 1px;
  color: #a6e62c;
}
.transport-row {
  display: flex;
  gap: 7px;
  margin-top: 12px;
}
.transport-row .tool { flex: none; }
.round {
  width: 27px;
  height: 27px;
  margin: 10px 7px 0 5px;
  border: 2px solid #5c6062;
  border-radius: 50%;
}
.round .caret { border-top-color: #333; }

/* Clip effects */
.fx {
  display: flex;
  align-items: flex-start;
  padding: 6px 0 11px 17px;
}
.fx-main {
  flex: 1;
  min-width: 0;
  padding: 0 9px 4px 8px;
  background: #444;
  border-radius: 5px;
}
.fx-top {
  display: flex;
  align-items: center;
  height: 49px;
  padding: 0 0 0 9px;
  border-bottom: 2px solid #595959;
}
.fx-label {
  color: #fff;
  font-size: 18px;
  font-weight: bold;
}
.clip-name {
  width: 694px;
  height: 28px;
  margin: 4px 9px 0 14px;
  background: linear-gradient(#747474, #5c5c5c);
  border: 1px solid #2c2c2c;
  border-radius: 2px;
  color: #fff;
  font-weight: bold;
}
.fx-presets {
  display: flex;
  align-items: center;
  height: 44px;
  padding: 2px 12px 0 10px;
  border: solid #333;
  border-width: 0 1px;
}
.fx-numbers {
  display: flex;
  width: 154px;
  height: 30px;
  margin: 0 12px 0 14px;
  background: linear-gradient(#666, #585858 48%, #4c4c4c 50%, #555);
  border: 1px solid #2c2c2c;
}
.fx-numbers button {
  flex: 1;
  border-right: 1px solid #3b3b3b;
  color: #fff;
  font-size: 17px;
  font-weight: bold;
}
.drop {
  position: relative;
  display: block;
}
.drop::after {
  content: "";
  position: absolute;
  right: 4px;
  top: 6px;
  border: solid transparent;
  border-width: 8px 6px 0;
  border-top-color: #6a6a6a;
}
.drop select {
  width: 100%;
  height: 100%;
  appearance: none;
  text-align: center;
  text-align-last: center;
}
.fx-drop {
  width: 193px;
  height: 28px;
  margin-right: 11px;
  padding-right: 10px;
  background: linear-gradient(#666, #545454);
  border: 1px solid #2c2c2c;
  border-radius: 3px;
  color: #fff;
  font-size: 15px;
  font-style: italic;
  font-weight: bold;
}
.fx-drop::after { border-top-color: #2d2d2d; }
.compare, .bypass {
  width: 101px;
  height: 27px;
  background: linear-gradient(#7bb0e2, #4b80b8);
  border: 2px solid #24486e;
  border-radius: 3px;
  color: #fff;
  font-size: 16px;
  font-weight: bold;
}
.bypass {
  margin-left: 12px;
  background: linear-gradient(#555, #3a3a3a);
  border-color: #1c1c1c;
  box-shadow: 0 0 0 1px #777;
}
.fx-panels {
  display: flex;
  gap: 9px;
  height: 335px;
  padding-top: 8px;
}
.panel {
  position: relative;
  background: #1c1c1c;
  border-radius: 5px;
  font-size: 17px;
  color: #b5b5b5;
}
.panel h2 {
  display: flex;
  align-items: center;
  gap: 7px;
  height: 28px;
  padding: 3px 10px 0;
  background: linear-gradient(#303030, #3a3a3a 50%, #282828);
  border-radius: 5px 5px 0 0;
  color: #fff;
  font-size: 18px;
}
.panel h2 svg { color: #2ecb1c; }
.panel b { color: #ccc; }
.dim {
  color: #747474;
  font-weight: bold;
  font-size: 16px;
}
.faint { color: #555; font-weight: bold; font-size: 16px; }
.faint.val { font-weight: normal; font-size: 17px; }
.off { color: #454c4c; }
.trim {
  display: flex;
  flex-direction: column;
  align-items: center;
  width: 121px;
  padding-top: 29px;
  flex: none;
  font-size: 16px;
}
.trim .dim { font-size: 15px; }
.trim b { margin-top: 22px; }
.trim hr {
  width: 96px;
  margin: 20px 0 20px;
  border: none;
  border-top: 2px solid #363636;
}
.polarity {
  width: 34px;
  height: 27px;
  margin-top: 14px;
  background: #5d5d5d;
  border-radius: 3px;
  color: #888;
}
.eq {
  flex: 1 1 974px;
}
.eq-body {
  display: flex;
  padding: 0 16px 0 5px;
}
.round-mini {
  width: 18px;
  height: 18px;
  margin-left: auto;
  background: #777;
  border-radius: 50%;
  clip-path: path("M0 9a9 9 0 1 1 18 0a9 9 0 1 1 -18 0M4 7l5 6 5-6z");
}
.eq .round-mini { margin-right: -6px; }
.eq-graph text, .dyn-graph text {
  fill: #8a8a8a;
  font-size: 14px;
}
.collapse {
  position: absolute;
  right: 4px;
  bottom: 6px;
  color: #ccc;
}
.bands {
  flex: 1;
  margin-left: 7px;
  margin-top: 4px;
  align-self: flex-start;
  border-collapse: collapse;
  table-layout: fixed;
}
.bands th {
  height: 26px;
  padding: 6px 0 0;
  text-align: left;
  font-weight: normal;
  color: #999;
}
.bands th:nth-child(1) { width: 74px; }
.bands th:nth-child(2) { width: 111px; }
.bands th:nth-child(3) { width: 96px; }
.bands th:nth-child(4) { width: 87px; }
.bands td {
  height: 55px;
  padding: 0;
  color: #a9a9a9;
}
.bands td:nth-child(-n+2) { padding-bottom: 6px; }
.bands td.off { color: #454c4c; }
.bands tbody tr + tr { border-top: 2px solid #333; }
.band {
  width: 55px;
  height: 27px;
  background: #3f3f3f;
  border-radius: 4px;
  color: #fff;
  font-size: 17px;
  font-weight: bold;
}
.band.wide { width: 105px; }
.shape {
  display: flex;
  width: 74px;
  height: 27px;
  background: linear-gradient(#6c6c6c, #555);
  border: 1px solid #2e2e2e;
  border-radius: 2px;
}
.shape button {
  flex: 1;
  border-right: 1px solid #3f3f3f;
  color: #929292;
}
.shape .on { color: #fff; }
.shape.four { width: 151px; }
.filters {
  flex: none;
  width: 292px;
}
.filter {
  display: grid;
  grid-template-columns: 31px 64px 151px;
  grid-template-rows: 27px 31px 28px;
  row-gap: 2px;
  align-items: center;
  align-content: start;
  height: 111px;
  margin: 0 16px;
  padding-top: 12px;
}
.panel h2 + .filter { height: 131px; padding-top: 31px; border-bottom: 2px solid #363636; }
.filter .dim { grid-column: 2; text-align: right; }
.filter .shape, .filter b, .filter .slope { grid-column: 3; margin-left: 12px; }
.filter b { margin-left: 21px; }
.filter .slope { margin-left: 15px; }
.num {
  width: 31px;
  height: 27px;
  background: #272727;
  border-radius: 4px;
  color: #5c5c5c;
  font-weight: bold;
}
.slope {
  width: 117px;
  height: 28px;
  background: linear-gradient(#747474, #585858);
  border-radius: 2px;
  color: #ccc;
  font-size: 14px;
  font-weight: bold;
}
.dynamics {
  flex: none;
  width: 1006px;
  overflow: hidden;
}
.dyn-body {
  display: flex;
}
.dyn-col {
  flex: none;
  width: 231px;
  height: 277px;
  margin-top: 8px;
  padding-left: 18px;
  border-right: 2px solid #303030;
}
.dyn-graph + .dyn-col { padding-left: 19px; }
.params {
  display: grid;
  grid-template-columns: 94px 1fr;
  grid-auto-rows: 28px;
  column-gap: 19px;
  align-items: center;
  padding-top: 10px;
  line-height: 28px;
  white-space: nowrap;
}
.params.loose { grid-auto-rows: 31px; padding-top: 9px; }
.params dt {
  text-align: right;
  color: #747474;
  font-size: 16px;
  font-weight: bold;
}
.side-chain {
  flex: none;
  width: 300px;
  padding: 9px 0 0 17px;
}
.source {
  display: grid;
  grid-template-columns: 78px 124px;
  row-gap: 14px;
  column-gap: 11px;
  align-content: center;
  align-items: center;
  height: 111px;
  padding-left: 16px;
  border: 2px solid #333;
  border-radius: 4px;
}
.source .slope { width: 124px; height: 30px; color: #ddd; font-weight: normal; }
.source .dim { text-align: right; }
.chain-line {
  display: flex;
  align-items: center;
  gap: 21px;
  margin-top: 24px;
}
.chain {
  width: 106px;
  height: 27px;
  background: #2a2a2a;
  border-radius: 4px;
  color: #666;
  font-weight: bold;
}
.chain-grid {
  display: grid;
  grid-template-columns: 98px 1fr;
  row-gap: 16px;
  column-gap: 12px;
  align-items: center;
  margin-top: 24px;
  padding-left: 1px;
}
.chain-grid .faint { text-align: right; }
.chain-grid .faint.val { text-align: left; }
.fx-scroll {
  display: flex;
  align-items: center;
  gap: 7px;
  height: 25px;
  padding: 0 5px 0 3px;
}
.fx-scroll .arrow-l { border-right-color: #2d2d2d; }
.fx-scroll .arrow-r { border-left-color: #2d2d2d; }
.fx-track {
  flex: 1;
  height: 17px;
}
.fx-thumb {
  width: 94%;
  height: 17px;
  background: #333;
  border-radius: 8px;
}
.fx-tabs {
  flex: none;
  width: 33px;
  margin-right: 12px;
}
.fx-tabs button {
  width: 31px;
  height: 40px;
  background: #3a3a3a;
  border-radius: 0 5px 5px 0;
}
.fx-tabs .on { background: #444; }

/* Edit window: rulers */
.edit {
  display: flex;
  padding: 0 10px 0 8px;
}
.edit-main {
  position: relative;
  flex: 1;
  min-width: 0;
}
.ruler {
  display: flex;
  height: 30px;
  border-bottom: 2px solid #262626;
  background: #3f3f3f;
  font-size: 17px;
  font-weight: bold;
}
.ruler-name {
  display: flex;
  align-items: center;
  flex: none;
  width: 430px;
  padding-left: 4px;
  color: #d0d0d0;
}
.ruler-name span:last-child { margin-left: auto; width: 378px; }
.lined .ruler-name {
  width: 258px;
  border-right: 2px solid #2c2c2c;
}
.lined .ruler-name span { width: 204px; }
.lined .arrow-r { margin-left: 13px; }
.ruler-line {
  position: relative;
  flex: 1;
  min-width: 0;
  overflow: hidden;
}
.bars {
  background: linear-gradient(#7f8994, #707a85);
  border-color: #20242a;
  color: #fff;
}
.bars .ruler-name { color: #fff; }
.bars .caret { margin-left: 4px; border-width: 8px 6px 0; }
.secs { color: #c5c5c5; }
.tick {
  position: absolute;
  top: 0;
  height: 28px;
  padding-left: 6px;
  border-left: 1px solid rgba(0, 0, 0, 0.35);
  line-height: 27px;
  white-space: nowrap;
}
.secs .tick { font-size: 16px; }
.range-sel {
  position: absolute;
  top: 0;
  bottom: 0;
  background: #455055;
}
.secs .range-sel { background: #272727; }
.flag {
  position: absolute;
  top: 2px;
}
.ruler-collab {
  display: flex;
  align-items: center;
  justify-content: flex-end;
  gap: 9px;
  width: 146px;
  padding-right: 4px;
  border-right: 2px solid #2c2c2c;
}
.mini {
  width: 28px;
  height: 20px;
  background: #3d3d3d;
  border: 2px solid #222;
  border-radius: 3px;
  box-shadow: 0 0 0 1px #606060;
  color: #ccc;
}
.steel { background: linear-gradient(#56758b, #3e5c72); border-color: #23394a; color: #e5eef5; }
.mini.lime, .sq.lime { background: linear-gradient(#9ed425, #78b412); border-color: #3c5c0a; color: #fff; }
.plus {
  width: 26px;
  padding-right: 4px;
  color: #aaa;
}
.tempo { background: #95ae5e; }
.markers { background: #8abed8; }
.heads {
  border-bottom-color: #555;
  background: #303030;
}
.heads .ruler-name {
  width: 256px;
  margin-right: 4px;
  background: linear-gradient(#4a5052, #444849);
}
.heads .caret { margin-left: 4px; border-width: 8px 7px 0; }
.heads .caret:last-child { margin: 0 5px 0 9px; }
.grow { flex: 1; }
.collab-head {
  width: 144px;
  background: #444;
  text-align: center;
  color: #fff;
  font-size: 15px;
  line-height: 30px;
}
.heads .ruler-line {
  background: linear-gradient(#aab0af, #8f9494);
}

/* Tracks */
.tracks {
  height: 721px;
  overflow: hidden;
  background: #303030;
}
.track {
  display: grid;
  grid-template-columns: 26px 196px 38px 144px 26px 1fr;
  height: 169px;
}
.track.slim { height: 40px; }
.strip {
  display: flex;
  flex-direction: column;
  align-items: center;
  justify-content: space-between;
  width: 22px;
  margin: 1px 0 3px;
  padding: 3px 0 10px;
  background: #123567;
  border-radius: 7px;
}
.strip.bright { background: #1a7cf8; }
.strip-dot {
  display: flex;
  align-items: center;
  justify-content: center;
  width: 18px;
  height: 18px;
  background: #577cae;
  border-radius: 50%;
}
.strip-dot .caret { border-width: 6px 5px 0; border-top-color: #1d3558; }
.strip .arrow-r { border-width: 6px 0 6px 10px; border-left-color: #7ba5d8; }
.controls {
  display: flex;
  flex-direction: column;
  width: 192px;
  margin: 1px 0 3px;
  background: #7d7d7d;
  border-radius: 2px;
}
.name-row {
  display: flex;
  height: 29px;
  color: #111;
}
.track-name {
  flex: 1;
  background: linear-gradient(#a5a5a5, #949494);
  border: 1px solid #aaa;
  color: #0b0b0b;
  font-size: 21px;
  font-weight: bold;
  white-space: nowrap;
}
.selected .track-name { border: 2px solid #19d8d0; }
.name-menu {
  width: 20px;
  background: linear-gradient(#c5c5c5, #a8a8a8);
  border-left: 1px solid #555;
  padding-bottom: 6px;
}
.name-menu .caret { border-width: 8px 6px 0; border-top-color: #666; }
.selected .name-menu { background: #316aa8; }
.selected .name-menu .caret { border-top-color: #14304f; }
.btn-row {
  display: flex;
  justify-content: space-between;
  padding: 6px 14px 7px;
}
.sq {
  width: 28px;
  height: 27px;
  background: linear-gradient(#6c6c6c, #4a4a4a 50%, #565656);
  border: 2px solid #262626;
  border-radius: 3px;
  color: #eee;
  font-size: 19px;
  font-weight: bold;
}
.sq.rec { background: linear-gradient(#6b5553, #472e2b); }
.rec::before {
  content: "";
  width: 14px;
  height: 14px;
  background: #eadcdc;
  border-radius: 50%;
}
.sq.muted { background: linear-gradient(#f09a4e, #d06a14); border-color: #8c420b; }
.sq.ghost { background: #888; border-color: #808080; }
.sq.none { visibility: hidden; }
.sq.sky { background: linear-gradient(#7eb2e0, #4b82b8); border-color: #2c557e; }
.sq.steel { background: linear-gradient(#56758b, #3e5c72); }
.sq.disabled { background: #3d3d3d; border-color: #484848; color: #777; }
.fields {
  display: grid;
  grid-template-columns: 19px 53px 100px;
  gap: 4px;
  padding: 0 4px;
  color: #111;
  font-weight: bold;
}
.field {
  height: 27px;
  background: linear-gradient(#cfcfcf, #a9a9a9);
  border: 1px solid #5e5e5e;
  border-radius: 3px;
}
.field.wide { grid-column: 1 / 4; padding-right: 16px; }
.field.mid { grid-column: 2 / 4; display: flex; align-items: center; justify-content: center; gap: 9px; }
.read { color: #207520; padding-right: 12px; }
.star { color: #555; text-align: center; line-height: 28px; }
.dyn.italic { background: #808080; font-style: italic; }
.mid.vacant { background: #757575; justify-content: flex-start; color: #555; padding-left: 2px; }
.led {
  width: 10px;
  height: 11px;
  background: #43f31b;
}
.slim .controls {
  flex-direction: row;
  align-items: center;
  background: #6d6d6d;
  padding: 3px 5px 3px 2px;
  gap: 2px;
}
.slim .track-name { height: 30px; flex: 1; }
.rism {
  display: flex;
  width: 78px;
  height: 28px;
  background: #4a4a4a;
  border: 2px solid #262626;
  border-radius: 3px;
  font-weight: bold;
}
.rism button { flex: 1; color: #fff; border-right: 1px solid #333; }
.rism .rec { flex: 0 0 20px; background: #533634; }
.rism .rec::before { width: 12px; height: 12px; }
.meters {
  display: flex;
  gap: 2px;
  padding: 3px 0 5px 1px;
}
.meter {
  width: 13px;
  border: 1px solid #0c0c0c;
  background: #333;
}
.meter.thin { width: 11px; margin-right: -2px; }
.meter.reduction {
  width: 9px;
  margin: 8px 0 20px 2px;
  background: #4a2a05;
}
.collab {
  padding: 4px 9px 0 6px;
  background: #333;
  border-left: 1px solid #3c3c3c;
}
.sq-row {
  display: flex;
  justify-content: space-between;
  height: 28px;
}
.owner {
  display: flex;
  align-items: center;
  width: 100%;
  height: 28px;
  margin-top: 3px;
  padding-left: 7px;
  background: linear-gradient(#587389, #3d586b);
  border: 2px solid #3c5f70;
  border-radius: 3px;
  color: #fff;
  font-size: 16px;
  font-weight: bold;
}
.owner span { flex: 1; padding-right: 10px; text-align: center; }
.owner.empty { background: #373737; border-color: #434343; color: #777; }
.scale {
  background: linear-gradient(90deg, #b0b0b0, #8f8f8f);
  border-right: 1px solid #333;
  border-bottom: 2px solid #777;
}
.lane {
  position: relative;
  min-width: 0;
  overflow: hidden;
  background: #b5b5b5;
  border-top: 2px solid #e2e2e2;
  border-bottom: 5px solid #949494;
}
.lane svg.art {
  position: absolute;
  left: 0;
  top: 0;
  width: 100%;
  height: 100%;
}
.clip {
  position: absolute;
  top: 0;
  bottom: 0;
  background: #9b8ad2;
  border: solid #0c0a20;
  border-width: 2px 1px;
}
.clip.red { background: #e6afab; }
.clip.dark { background: #2e293e; border-color: #14111f; }
.clip.midi { background: rgba(150, 130, 180, 0.14); border: none; }
.clip-title, .badges, .gain {
  position: absolute;
  z-index: 2;
}
.clip-title {
  left: 2px;
  top: 1px;
  padding: 0 3px;
  background: #4c4268;
  border-radius: 4px;
  color: #fff;
  font-size: 17px;
  font-weight: bold;
  line-height: 22px;
}
.dark .clip-title { background: #3a3a3c; }
.badges {
  display: flex;
  gap: 12px;
  right: 12px;
  top: 2px;
}
.badge {
  display: flex;
  align-items: center;
  height: 20px;
  padding: 0 4px;
  background: #4c4268;
  border-radius: 3px;
  color: #c0b5e5;
  font-size: 16px;
}
.badge:has(svg) { padding: 0; }
.midi .badge { background: #666; color: #ddd; padding: 0 5px; }
.midi .badges { top: 6px; right: 9px; }
.dark .badge { background: #14121c; color: #999; }
.gain {
  display: flex;
  gap: 3px;
  left: 3px;
  bottom: 2px;
  color: #fff;
  font-size: 17px;
  font-weight: bold;
}
.gain span {
  padding: 0 4px;
  background: #4c4268;
  border-radius: 4px;
  line-height: 22px;
}
.gain span:first-child { padding: 1px 0; }
.dark .gain span { background: #3a3a3c; }
.dark .gain span:first-child { background: #111; }
.overlay {
  position: absolute;
  left: 430px;
  right: 0;
  top: 0;
  bottom: 0;
  pointer-events: none;
}
.playhead {
  position: absolute;
  top: 0;
  bottom: 0;
  width: 2px;
  background: linear-gradient(#e8e8e8 149px, #15102d 149px 528px, #999 528px 696px, #15102d 696px);
}

/* Right side column */
.side {
  display: flex;
  flex-direction: column;
  flex: none;
  width: 25px;
  padding-left: 1px;
  font-size: 12px;
}
.side-top, .side-gap, .side-tempo, .side-markers, .az {
  height: 30px;
  flex: none;
}
.side-top { padding: 5px 2px; background: #555; }
.side-tempo { margin-left: -1px; background: #95ae5e; border-bottom: 2px solid #262626; }
.side-markers { background: #8c8c8c; border-bottom: 2px solid #262626; }
.az {
  align-items: stretch;
  padding: 0 3px;
  background: #2e2e2e;
  color: #ddd;
  font-size: 14px;
  font-weight: bold;
  line-height: 15px;
}
.az span + span { align-self: flex-end; }
.side-btn {
  flex: none;
  height: 35px;
  background: linear-gradient(90deg, #c5c5c5, #9d9d9d);
  border: 1px solid #777;
}
.side-btn.dark { height: 29px; background: linear-gradient(#777, #555); color: #eee; }
.side-btn.pm { height: 27px; color: #222; font-size: 22px; font-weight: bold; }
.v-scroll {
  display: flex;
  flex-direction: column;
  flex: 1;
  padding-top: 202px;
  background: #ababab;
}
.v-thumb {
  height: 87px;
  background: linear-gradient(90deg, #888, #555);
  border-bottom: 1px solid #222;
}

/* Bottom bar */
.bottom {
  display: flex;
  height: 26px;
  margin: 0 10px 0 8px;
  background: #444;
}
.bottom-left {
  display: flex;
  align-items: center;
  gap: 13px;
  flex: none;
  width: 429px;
  padding-left: 3px;
}
.play {
  margin-left: 162px;
  color: #5be35b;
  font-size: 18px;
}
.h-scroll {
  flex: 1;
  padding-left: 727px;
  background: #ababab;
}
.h-thumb {
  width: 299px;
  height: 24px;
  background: linear-gradient(#808080, #484848);
}
.h-buttons {
  display: flex;
  width: 160px;
  color: #ccc;
}
.h-buttons svg { margin: 4px; }
.h-buttons button {
  flex: none;
  width: 26px;
  background: linear-gradient(#c0c0c0, #9a9a9a);
  border: 1px solid #777;
  color: #222;
  font-size: 20px;
  font-weight: bold;
}
.h-buttons .dark { width: 28px; background: linear-gradient(#777, #555); color: #eee; font-size: 13px; }
```

FILE: script.js
```
// Width of the visible timeline in drawing units
const VIEW = 2027;
const BAR = 102.77;
const FIRST_BAR = 12.5;
const pct = x => (x / VIEW * 100).toFixed(3) + '%';
const use = (id, w, h) => `<svg width="${w}" height="${h}"><use href="#i-${id}"/></svg>`;

// Waveforms: [x, up, down] triples. Each has two runs with their own origin and step.
const RUNS = [{ x: -8, step: 0.638 }, { x: 962, step: 0.7015 }];
const LEAD = [[
  0,1,1, 88,1,1, 96,12,10, 101,40,30, 106,44,54, 112,38,56, 117,48,58, 121,6,6, 126,5,5, 130,60,60, 132,106,123, 135,100,116, 138,88,60, 143,3,3,
  148,30,50, 152,94,118, 156,60,70, 162,3,3, 167,5,5, 172,40,54, 178,30,50, 186,110,112, 190,84,102, 196,80,100, 202,30,46, 208,32,40, 214,20,30,
  220,44,40, 228,74,112, 234,50,70, 240,20,36, 247,4,4, 252,2,2, 260,8,6, 268,2,2, 296,3,3, 302,5,5, 308,4,4, 314,60,60, 321,64,84, 327,84,80,
  331,80,100, 334,140,120, 337,144,138, 342,80,96, 349,40,50, 354,6,8, 362,6,5, 368,1,1, 386,8,5, 390,1,1, 420,2,3, 427,50,65, 431,30,60,
  434,110,118, 439,122,100, 444,114,90, 449,20,20, 453,10,138, 457,108,80, 461,20,24, 465,50,60, 470,92,126, 474,60,60, 479,6,8, 487,42,64,
  496,10,14, 500,12,20, 505,108,110, 510,60,70, 516,44,50, 524,6,6, 530,1,1, 545,5,3, 550,1,1, 578,5,4, 584,1,1, 628,2,2, 636,40,60, 640,55,84,
  646,36,60, 654,48,50, 662,46,60, 668,34,60, 672,54,50, 676,90,110, 679,112,160, 683,90,165, 687,70,120, 692,50,70, 700,30,52, 708,22,30,
  716,20,26, 740,22,24, 755,20,22, 764,14,14, 770,3,3, 790,4,4, 794,40,50, 798,76,105, 803,64,110, 808,58,100, 813,70,120, 817,112,160,
  822,90,136, 832,78,96, 838,50,60, 845,30,40, 850,3,3, 862,6,5, 878,1,1, 985,2,2, 990,30,40, 995,60,60, 1000,94,118, 1005,60,100, 1010,40,60,
  1020,22,28, 1036,16,24, 1050,16,18, 1078,14,20, 1090,6,6, 1096,1,1, 1112,4,4, 1118,70,90, 1125,134,112, 1132,100,106, 1137,50,54, 1141,64,80,
  1148,58,76, 1153,40,50, 1157,3,3, 1170,2,2, 1185,6,5, 1198,2,2, 1270,2,3, 1276,60,60, 1280,40,84, 1284,46,50, 1292,80,90, 1297,46,60,
  1303,40,60, 1310,60,60, 1318,66,80, 1325,108,150, 1329,96,172, 1334,40,120, 1338,40,56, 1350,26,46, 1364,22,44, 1385,22,32, 1402,20,20,
  1412,4,4, 1430,4,4, 1436,30,60, 1442,72,104, 1450,72,88, 1456,74,110, 1462,108,148, 1468,80,108, 1476,74,84, 1484,30,40, 1494,6,6, 1500,2,2, 1534,1,1
], [
  60,1,1, 67,3,3, 74,58,60, 79,30,38, 88,38,60, 95,36,68, 101,48,66, 105,20,30, 110,88,116, 114,24,40, 128,18,28, 150,14,20, 165,6,10, 178,2,2,
  204,2,2, 210,24,28, 217,50,80, 223,140,138, 228,80,96, 233,14,20, 239,92,124, 246,84,100, 249,60,76, 253,86,108, 257,70,60, 260,4,4, 292,1,1,
  458,1,1, 463,20,30, 470,56,50, 475,54,60, 480,44,82, 486,20,56, 496,44,66, 502,24,34, 507,36,54, 515,56,86, 521,46,94, 527,58,102, 533,50,82,
  538,10,10, 543,80,106, 549,76,104, 553,20,30, 557,10,16, 563,42,78, 568,30,50, 573,40,60, 577,88,168, 582,70,60, 590,30,44, 600,18,30,
  612,4,4, 632,1,1, 640,8,8, 646,1,1, 740,2,2, 752,4,4, 757,8,14, 763,40,40, 771,62,84, 776,36,74, 784,34,58, 790,54,70, 797,52,66, 804,62,84,
  811,50,78, 818,62,96, 823,20,30, 826,2,2, 832,22,32, 840,30,42, 847,22,28, 853,74,102, 859,50,60, 865,26,42, 875,64,86, 882,40,50, 892,20,34,
  903,12,26, 912,6,8, 918,1,1, 1047,1,1, 1053,18,26, 1059,40,40, 1064,88,106, 1069,50,70, 1073,16,20, 1078,30,40, 1087,40,60, 1096,50,76,
  1103,24,46, 1113,52,60, 1122,30,44, 1130,38,58, 1140,50,70, 1148,74,106, 1153,16,32, 1160,36,50, 1166,74,70, 1174,36,56, 1184,16,22,
  1196,8,8, 1208,2,2, 1350,1,1, 1354,10,90, 1358,98,90, 1364,66,78, 1370,60,56, 1378,40,76, 1388,76,74, 1394,20,30, 1399,22,38, 1405,48,66,
  1411,20,22, 1414,4,4, 1424,34,40, 1432,20,30, 1440,58,46, 1447,34,48, 1457,58,118, 1463,40,60, 1472,26,38, 1482,16,26, 1495,8,10, 1510,4,4, 1520,1,1
]];
const VOX2 = [[
  488,1,1, 492,5,5, 497,1,1, 535,2,2, 541,22,24, 550,25,30, 556,20,28, 564,16,24, 600,18,24, 612,24,24, 628,18,26, 650,14,22, 658,2,4, 676,6,6,
  685,6,10, 692,30,32, 702,40,40, 712,44,50, 722,38,44, 735,36,40, 748,30,36, 754,38,42, 762,30,34, 768,2,4, 790,1,1, 795,6,5, 800,1,1,
  840,1,1, 847,24,18, 852,8,8, 860,1,1, 880,1,1, 883,5,4, 886,1,1, 928,1,1, 933,6,5, 938,2,2, 944,4,4, 956,30,24, 975,28,22, 1000,30,22,
  1020,20,22, 1038,22,18, 1055,16,16, 1071,2,3, 1084,4,4, 1090,1,1, 1098,2,3, 1103,44,48, 1107,60,52, 1113,44,46, 1120,46,44, 1125,40,42,
  1129,56,54, 1134,38,42, 1145,36,34, 1152,32,28, 1160,10,12, 1166,2,2, 1183,4,1, 1186,1,1, 1290,1,1, 1294,6,4, 1298,1,1, 1308,4,6, 1315,36,30,
  1322,26,22, 1327,48,46, 1333,38,32, 1345,44,38, 1352,22,26, 1359,46,40, 1368,34,30, 1390,26,22, 1420,26,18, 1440,18,16, 1460,12,8,
  1475,6,6, 1484,12,8, 1492,8,8, 1500,8,8, 1506,14,16, 1512,38,38
], [
  0,40,36, 8,44,40, 13,62,58, 18,44,38, 28,44,34, 38,40,32, 44,16,18, 49,3,3, 60,10,8, 68,2,2, 72,1,1, 170,2,4, 175,36,28, 182,44,30, 188,42,28,
  192,12,12, 196,38,32, 205,40,34, 214,56,34, 218,10,16, 221,14,20, 224,68,68, 228,48,40, 238,42,36, 250,42,36, 262,44,44, 272,34,32, 282,24,24,
  292,26,18, 302,10,14, 312,2,2, 328,1,1, 332,6,5, 336,1,1, 354,4,6, 358,36,30, 363,48,34, 372,38,30, 384,38,36, 389,46,32, 394,26,26,
  400,38,34, 408,22,22, 416,10,10, 422,2,2, 430,8,6, 436,1,1, 457,1,1
]];
const LISA = [[
  13,4,26, 18,6,4, 28,1,1, 136,3,1, 140,1,1, 194,1,1, 200,6,4, 206,2,2, 211,6,16, 217,34,50, 223,6,8, 226,10,30, 230,90,120, 233,140,180,
  236,120,194, 241,90,160, 246,20,30, 250,10,30, 257,84,120, 262,84,146, 268,84,140, 274,14,20, 280,60,90, 287,94,146, 293,30,40, 298,14,16,
  302,60,80, 308,110,140, 314,130,170, 319,202,188, 324,120,180, 328,16,30, 333,60,130, 341,98,164, 348,128,150, 353,118,120, 357,128,126,
  364,90,110, 372,40,60, 380,20,26, 388,3,3, 404,3,3, 409,40,80, 411,86,140, 414,76,148, 420,80,100, 428,60,60, 432,14,10, 436,30,34,
  446,30,50, 460,32,50, 473,44,52, 485,34,46, 500,34,56, 515,32,40, 528,18,20, 538,14,14, 543,40,80, 551,114,170, 556,86,150, 570,80,130,
  588,58,100, 605,30,64, 620,26,42, 640,24,26, 660,20,18, 668,3,3, 685,6,6, 690,30,50, 697,70,90, 707,74,94, 716,54,94, 722,60,130,
  726,70,142, 733,56,110, 745,48,78, 760,44,62, 775,24,40, 790,14,26, 812,12,12, 834,2,2, 922,1,1, 926,6,5, 930,1,1, 939,3,6, 948,60,90,
  956,70,152, 966,84,136, 972,80,152, 979,92,148, 990,72,120, 1005,48,96, 1018,30,50, 1035,26,34, 1052,28,34, 1060,10,10, 1064,2,2,
  1072,6,5, 1082,1,1, 1090,10,12, 1098,40,70, 1104,80,116, 1115,74,114, 1124,80,116, 1128,30,60, 1134,92,124, 1140,90,90, 1149,104,120,
  1160,94,118, 1175,84,84, 1190,56,76, 1205,34,48, 1225,18,34, 1235,2,4, 1300,1,1, 1307,6,6, 1312,3,3, 1318,30,50, 1328,64,86, 1335,40,60,
  1345,36,68, 1355,34,78, 1361,36,40, 1366,50,100, 1371,80,150, 1378,60,112, 1395,58,100, 1415,34,74, 1430,24,42, 1462,20,22, 1473,2,3,
  1480,6,5, 1488,2,2, 1500,6,8, 1508,36,60, 1518,62,90
], [
  0,58,100, 8,54,104, 14,50,110, 19,72,138, 30,56,110, 52,44,84, 64,22,40, 80,18,28, 100,12,20, 113,2,2, 148,4,4, 164,4,6, 170,30,46,
  177,54,74, 181,10,16, 186,10,16, 190,50,90, 200,66,120, 208,70,116, 214,72,138, 219,74,124, 225,16,40, 228,54,100, 232,40,60, 238,26,40,
  262,26,36, 275,24,40, 300,20,30, 340,18,26, 356,14,20, 362,30,50, 370,64,98, 378,60,86, 385,36,56, 391,44,68, 402,28,44, 430,20,28,
  455,12,18, 482,2,2, 640,1,1, 647,4,4, 652,1,1, 658,16,20, 665,40,66, 678,44,64, 688,66,90, 694,62,108, 700,60,84, 705,6,6, 709,10,20,
  718,46,70, 727,56,90, 735,66,106, 742,46,80, 749,30,60, 757,50,80, 763,10,10, 767,8,14, 773,40,50, 785,40,60, 790,12,30, 797,36,50,
  815,24,42, 835,14,24, 849,2,2, 1017,1,1, 1023,6,5, 1028,1,1, 1031,4,4, 1037,50,70, 1043,20,30, 1050,70,90, 1056,88,130, 1061,56,80,
  1068,10,10, 1075,44,60, 1082,64,90, 1090,30,60, 1095,40,60, 1102,56,92, 1109,40,60, 1113,4,4, 1120,50,80, 1133,60,128, 1140,46,100,
  1145,62,80, 1147,50,110, 1155,40,80, 1172,36,56, 1190,22,30, 1206,2,2, 1265,4,3, 1268,1,1, 1306,4,4, 1310,1,1, 1325,5,4, 1330,1,1,
  1365,3,3, 1372,8,5, 1380,2,2, 1394,8,6, 1402,14,20, 1407,70,90, 1414,72,104, 1422,50,100, 1427,20,30, 1432,74,120, 1437,14,20,
  1442,20,60, 1448,142,156, 1453,100,120, 1458,6,6, 1462,10,20, 1466,120,150, 1470,160,176, 1475,60,100, 1479,6,6, 1484,30,40,
  1489,80,104, 1494,40,70, 1500,20,30, 1506,8,8, 1512,70,100, 1517,150,160, 1522,120,140
]];

// MIDI notes: offset from the clip start, then the height of each diamond
const PHRASE = [[6,87],[20,76],[34,89,131],[48,73],[55,95,100],[68,71],[82,91,115],[96,76],[110,106],[125,76],[131,131],[138,89],
  [145,73],[159,96,124],[173,71],[187,102],[201,76],[215,89,107],[222,76],[236,89,131],[249,73],[263,101,105],[277,71],[291,102],
  [298,76],[312,89,131],[326,65],[340,100,110],[354,76],[368,89,131],[382,87],[389,84,110],[402,71]];
const INTRO = [[1,37],[9,20,35,41],[17,20,37],[31,55,60,65],[45,40,57],[59,18,24,37,45],[73,55,63],[86,46,58],[94,20,37,45],[107,20,36,42]];
const CHORUS = [[6,34,39,49],[20,59,72],[34,54,64],[48,36,49],[55,60,70],[69,47,60],[82,34,45],[97,45,60],[110,20,36],[124,55,67],
  [131,44,57],[145,26,37,41],[159,65,76],[173,45,58],[187,34,49],[202,40,47],[208,36,44,51],[222,60,72],[236,54,62],[250,36,49],
  [264,60,70],[278,47,64],[285,34,45],[298,45,60],[312,20,36],[326,55,67],[340,42,58],[354,20,34,45],[368,62],[375,45,55],
  [389,20,37],[403,20,39],[417,57,67],[431,49,62],[445,34,49],[459,49,60],[466,57,69],[480,51,65],[494,34,50],[507,47,59],
  [522,29,39],[529,60],[536,57,74],[543,44,55],[556,26,37],[570,65,75],[584,45,58],[598,34,49],[612,40,62],[619,34,47],
  [633,60,72],[647,54,64],[661,36,47],[675,60,70]];

function wavePath(runs, mid) {
  const top = [], bottom = [];
  runs.forEach((run, r) => {
    for (let i = 0; i < run.length; i += 3) {
      const x = (RUNS[r].x + run[i] * RUNS[r].step).toFixed(1);
      top.push(x + ' ' + (mid - run[i + 1] * 0.357).toFixed(1));
      bottom.unshift(x + ' ' + (mid + run[i + 2] * 0.357).toFixed(1));
    }
  });
  return 'M' + top.concat(bottom).join('L') + 'z';
}

function gridLines(h, color, strength) {
  let out = '';
  for (let i = 0; i < 40; i++) {
    const x = (FIRST_BAR + i * BAR / 2).toFixed(1);
    out += `<path d="M${x} 0V${h}" stroke="${color}" stroke-opacity="${i % 2 ? strength / 3 : strength}"/>`;
  }
  return out;
}

function art(h, body) {
  return `<svg class="art" viewBox="0 0 ${VIEW} ${h}" preserveAspectRatio="none">${body}</svg>`;
}

function notes(list, start) {
  let out = '';
  list.forEach(([dx, ...ys]) => {
    const x = start + dx;
    out += `<path d="M${x} ${ys[0]}V162" stroke="#21005f" stroke-width="2"/>`;
    ys.forEach(y => { out += `<path d="M${x} ${y - 11}l8 9-8 9-8-9z"/>`; });
    out += `<rect x="${x + 2}" y="159" width="5" height="3"/>`;
  });
  return out;
}

function dashes(from, to, step, y, h) {
  let out = '';
  for (let x = from, i = 0; x < to; x += step, i++) {
    out += `<rect x="${x}" y="${y}" width="${[3, 5, 2, 4, 6, 2][i % 6]}" height="${h}"/>`;
  }
  return out;
}

function pianoArt() {
  let rows = '';
  [[0, 10], [33, 11], [53, 11], [76, 10], [107, 11], [130, 10]].forEach(([y, h]) => {
    rows += `<rect y="${y}" width="${VIEW}" height="${h}" fill="#a2a2a4"/>`;
  });
  [22, 98, 153].forEach(y => { rows += `<rect y="${y}" width="${VIEW}" height="1" fill="#999"/>`; });
  return art(162, rows + gridLines(162, '#333', 0.3) + '<g fill="#21005f">' +
    notes(INTRO, 0) + notes(PHRASE, 527) + notes(PHRASE, 938) + notes(CHORUS, 1349) +
    dashes(2, 108, 13, 8, 10) + dashes(2, 112, 13, 138, 10) +
    dashes(528, 640, 9, 151, 11) + dashes(642, 840, 12, 138, 10) + dashes(876, 1050, 9, 151, 11) +
    dashes(1053, 1250, 12, 138, 10) + dashes(1284, 1460, 9, 151, 11) +
    dashes(1364, 1460, 12, 64, 10) + dashes(1466, 1546, 13, 8, 10) + dashes(1466, 1546, 13, 138, 10) +
    dashes(1671, 1755, 13, 8, 10) + dashes(1671, 1755, 13, 138, 10) +
    dashes(1760, 1870, 9, 151, 11) + dashes(1760, 1870, 12, 64, 10) +
    dashes(1875, 1960, 13, 8, 10) + dashes(1875, 1960, 13, 138, 10) + '</g>' +
    '<path d="M116 0V162M527 0V162" stroke="#222" stroke-width="2"/>' +
    '<path d="M938 0V162M1350 0V162" stroke="#000"/><path d="M939 12V162M1351 12V162" stroke="#000" stroke-width="3" stroke-dasharray="12 8"/>');
}

function gtrArt() {
  const sizes = [[6,6,3,2],[4,5,3],[6,5,3],[4,5,3],[3,3,3],[7,7,4,3],[3,3,2],[4,5,3],[7,6,3],[4,5,4],[4,4,2],[7,7,4,4],[3,5,3],[4,4,3],[4,4,4],[6,6,4,3],[3,3],[6,5,3,2],[6,6,4,4],[4,5,3]];
  let out = `<path d="M0 15H${VIEW}" stroke="#7d1a12" stroke-width="1.500"/>`;
  sizes.forEach((row, i) => row.forEach((r, j) => {
    const x = FIRST_BAR + i * BAR + 3 + j * 13;
    const h = r * 0.7;
    out += `<path fill="#b8200f" d="M${x - 6} 15l2-${h / 2} 3-${h / 2} 3 ${h / 3} 4 ${h * 2 / 3}-3 ${h / 2}-4 ${h / 2}-3-${h / 2}z"/>`;
  }));
  return art(33, gridLines(33, '#a44', 0.2) + out);
}

function waveArt(runs, dark) {
  const fill = dark ? 'fill="#7463b8" stroke="#a296dc"' : 'fill="#170060"';
  const from = dark ? 302 : 0;
  const to = dark ? 1283 : VIEW;
  return art(162, gridLines(162, '#446', dark ? 0.35 : 0.15) +
    `<path d="M${from} 82H${to}" stroke="${dark ? '#8f82cc' : '#170060'}" stroke-width="1.500"/><path ${fill} d="${wavePath(runs, 82)}"/>`);
}

// One clip on a lane
function clip(c) {
  const badges = (c.badges || []).map(b => `<span class="badge">${b}</span>`).join('');
  return `<div class="clip ${c.type || ''}" style="left:${pct(c.from)};width:${pct(c.to - c.from)}">
    ${c.title ? `<span class="clip-title">${c.title}</span>` : ''}
    ${badges ? `<div class="badges">${badges}</div>` : ''}
    ${c.gain ? `<div class="gain"><span>${use('fader', 18, 20)}</span><span>0 dB</span></div>` : ''}
  </div>`;
}

// Meter levels are percentages from the top
function meter(m, thin) {
  const [peak, a, b, c, d] = m;
  return `<div class="meter ${thin}" style="background:linear-gradient(#4a0505 5%,#3b3409 5% ${peak}%,#d59a3c ${peak}% ${peak + 1}%,#3b3b07 ${peak + 1}% ${a}%,#47f52a ${a}% ${b}%,#353d06 ${b}% ${c}%,#47f52a ${c}% ${d}%,#13a116 ${d}%)"></div>`;
}

function scaleArt(t) {
  if (t.type === 'midi') {
    let keys = '';
    [37, 59, 82, 115, 134].forEach(y => { keys += `<rect x="0" y="${y - 5}" width="13" height="9" rx="3" fill="#111"/><path d="M13 ${y}h9" stroke="#555"/>`; });
    return `<svg width="25" height="167" viewBox="0 0 25 167"><path fill="#eee" d="M0 0h24v167H0z"/><path stroke="#111" stroke-width="2" d="M0 21h24M0 152h24"/><path stroke="#888" d="M0 97h24M0 13h24M0 155h24"/>${keys}<path fill="#222" d="M12 2l6 7H6zM12 164l6-7H6z"/><text x="13" y="20" font-size="14">5</text><text x="13" y="150" font-size="16">4</text></svg>`;
  }
  if (t.slim) return '';
  let ticks = '';
  for (let i = 0; i < 7; i++) ticks += `<path d="M${i === 3 ? 10 : i % 2 ? 17 : 21} ${9 + i * 25}H25" stroke="#666"/>`;
  return `<svg width="25" height="167" viewBox="0 0 25 167">${ticks}</svg>`;
}

const METRO = use('metro', 19, 19);
const TRACKS = [
  { name: 'PianoMg', type: 'midi', view: 'velocity', last: 'none', icon: 'tri', selected: true,
    meters: [[34, 51, 55, 64, 75], [38, 60, 65, 71, 75]], reduction: true,
    clips: [{ from: 0, to: 117, type: 'midi', badges: ['T'] }, { from: 527, to: 939, type: 'midi', badges: ['T'] }, { from: 938, to: 1350, type: 'midi', badges: ['T'] }, { from: 1349, to: VIEW, type: 'midi' }],
    art: pianoArt() },
  { name: 'Gtr Delay', slim: true, meters: [[50, 72, 74, 74, 82]], clips: [{ from: -2, to: VIEW + 2, type: 'red' }], art: gtrArt() },
  { name: 'Lead Vox', view: 'waveform', last: 'Monophonic', icon: 'tri', muted: true, meters: [[24, 51, 56, 61, 74]],
    clips: [{ from: -2, to: 377, badges: ['Ø', 'DYN', 'EQ', METRO] }, { from: 376, to: 1252, title: 'Lead Vox_01-13', gain: true, badges: [METRO] }, { from: 1251, to: VIEW + 2, title: 'Lead Vox_01-15', gain: true, badges: [METRO] }],
    art: waveArt(LEAD) },
  { name: 'Vox 2', view: 'waveform', last: 'Monophonic', icon: 'clock', meters: [[64, 76, 81, 88, 88]],
    clips: [{ from: 302, to: 1284, type: 'dark', title: 'Vox 2_02-02', gain: true, badges: ['DYN', 'EQ'] }],
    art: waveArt(VOX2, true) },
  { name: 'Lisa Vox', view: 'waveform', icon: 'clock', meters: [[7, 43, 47, 51, 74]], reduction: true,
    clips: [{ from: -2, to: VIEW + 2 }], art: waveArt(LISA) }
];

function controls(t) {
  if (t.slim) {
    return `<div class="controls"><button class="track-name">${t.name}</button><div class="rism"><button class="rec" aria-label="Record"></button><button>I</button><button>S</button><button>M</button></div></div>`;
  }
  const midi = t.type === 'midi';
  let last = `<div class="field mid vacant">${METRO}</div>`;
  if (midi) last = `<button class="field mid">none</button>`;
  else if (t.last) last = `<button class="field mid">${METRO}${t.last}<i class="led"></i></button>`;
  return `<div class="controls">
    <div class="name-row"><button class="track-name">${t.name}</button><button class="name-menu" aria-label="Track menu"><i class="caret"></i></button></div>
    <div class="btn-row"><button class="sq rec" aria-label="Record"></button>${midi ? '<span class="sq ghost"></span>' : '<button class="sq">I</button>'}<button class="sq">S</button><button class="sq ${t.muted ? 'muted' : ''}">M</button></div>
    <div class="fields">
      <label class="drop field wide"><select aria-label="Track view"><option>${t.view}</option></select></label>
      <span class="star">✱</span><button class="field dyn ${midi ? 'italic' : ''}">dyn</button>
      <label class="drop field read"><select aria-label="Automation mode"><option>read</option></select></label>
      <button class="field" aria-label="Timebase">${use(t.icon, 16, 18)}</button>${last}
    </div>
  </div>`;
}

function collab(t) {
  const midi = t.type === 'midi';
  const off = midi ? 'disabled' : '';
  return `<div class="collab">
    <div class="sq-row">
      <button class="sq ${midi ? '' : 'sky'}" aria-label="Share">${use('share', 19, 19)}</button>
      <button class="sq ${t.slim ? 'steel' : 'none'}" aria-label="Owner">${use('person', 19, 19)}</button>
      <button class="sq ${midi ? off : 'lime'}" aria-label="Upload">${use('up', 18, 18)}</button>
      <button class="sq ${off}" aria-label="Download">${use('down', 18, 18)}</button>
    </div>
    ${t.slim ? '' : `<button class="owner ${midi ? 'empty' : ''}">${use('person', 16, 18)}<span>${midi ? '' : 'Tony'}</span></button>`}
  </div>`;
}

// The last row is the top edge of a track below the fold
document.getElementById('tracks').innerHTML = TRACKS.map(t => `
  <div class="track ${t.slim ? 'slim' : ''} ${t.selected ? 'selected' : ''}">
    <div class="strip ${t.selected ? 'bright' : ''}"><span class="strip-dot"><i class="caret"></i></span>${t.slim ? '' : '<i class="arrow-r"></i>'}</div>
    ${controls(t)}
    <div class="meters">${t.meters.map(m => meter(m, t.meters.length > 1 ? 'thin' : '')).join('')}${t.reduction ? '<div class="meter reduction"></div>' : ''}</div>
    ${collab(t)}
    <div class="scale">${scaleArt(t)}</div>
    <div class="lane">${t.clips.map(clip).join('')}${t.art}</div>
  </div>`).join('') + `
  <div class="track">
    <div></div><div class="controls"></div><div></div><div></div><div class="scale"></div>
    <div class="lane">${clip({ from: 276, to: 1315 })}</div>
  </div>`;

// Rulers
const selection = `<div class="range-sel" style="left:${pct(302)};width:${pct(982)}"></div>`;
let bars = selection;
for (let i = 0; i < 20; i++) bars += `<span class="tick" style="left:${pct(FIRST_BAR + i * BAR)}">${49 + i}</span>`;
bars += `<svg class="flag" style="left:${pct(97)}" width="12" height="22" viewBox="0 0 12 22"><path fill="#fff" stroke="#111" stroke-width="1.500" d="M1 22V1h10L2 12"/></svg>`;
bars += `<svg class="flag" style="left:${pct(288)}" width="16" height="26" viewBox="0 0 16 26"><path fill="#5d9be0" stroke="#111" stroke-width="1.500" d="M8 0h7v26L1 14h7z"/></svg>`;
bars += `<svg class="flag" style="left:${pct(1275)}" width="24" height="26" viewBox="0 0 24 26"><path fill="#fff" d="M0 1h8v9z"/><path fill="#5d9be0" stroke="#111" stroke-width="1.500" d="M9 0h7v14h7L9 26z"/></svg>`;
document.getElementById('barRuler').innerHTML = bars;

let times = selection;
for (let i = 0; i < 23; i++) {
  const s = 110 + i * 2;
  times += `<span class="tick" style="left:${pct(26 + i * 89.9)}">${Math.floor(s / 60)}:${String(s % 60).padStart(2, '0')}</span>`;
}
document.getElementById('timeRuler').innerHTML = times;
document.getElementById('playhead').style.left = pct(652);

// EQ curve
let eq = '<rect x="62" y="11" width="404" height="240" fill="#000" stroke="#24504a"/>';
[117, 157, 253, 293, 387, 427].forEach(x => { eq += `<path d="M${x} 11V251" stroke="#1d3a36"/>`; });
[51, 91, 131, 171, 211].forEach(y => { eq += `<path d="M62 ${y}H466" stroke="#1d3a36"/>`; });
eq += `<defs><linearGradient id="redFade" x1="0" y1="0" x2="0" y2="1"><stop offset="0" stop-color="#86200a"/><stop offset="1" stop-color="#4a2008"/></linearGradient><linearGradient id="tealFade" x1="0" x2="1"><stop offset="0" stop-color="#24403c" stop-opacity="0.3"/><stop offset="1" stop-color="#1e6f6f"/></linearGradient></defs>
  <path fill="url(#redFade)" d="M62 133C130 138 148 162 172 181C184 191 204 191 215 178C240 148 262 138 306 131H62z"/>
  <path fill="#6f5a22" d="M270 132Q320 128 348 122Q376 128 404 132z"/>
  <path fill="url(#tealFade)" d="M370 131H466V152C440 146 405 136 370 131z"/>
  <path fill="none" stroke="#8cc7b5" stroke-width="2" d="M62 133C130 138 148 162 172 181C184 191 204 191 215 178C240 148 266 138 306 131L342 122H352L384 131C410 138 440 150 466 152"/>
  <path fill="#2f8a70" d="M62 9h8v8h-8zM458 9h8v8h-8z"/>`;
[[195, 189, '#c4101c'], [227, 131, '#ff8c0a'], [348, 121, '#f0ea62'], [430, 152, '#1496f4']].forEach(([x, y, c]) => {
  eq += `<circle cx="${x}" cy="${y}" r="7" fill="${c}" stroke="#111"/>`;
});
['+12', '8', '4', '0', '-4', '-8', '- 12dB'].forEach((t, i) => {
  eq += `<text x="54" y="${[20, 57, 97, 137, 177, 217, 252][i]}" text-anchor="end">${t}</text>`;
});
['0', '-2', '-4', '-6', '-8', '-10', '- 12dB'].forEach((t, i) => {
  eq += `<text x="474" y="${[20, 57, 97, 137, 177, 217, 252][i]}">${t}</text>`;
});
[['20Hz', 76], ['50', 116], ['100', 157], ['500', 251], ['1k', 291], ['5k', 387], ['10k', 426], ['20k', 457]].forEach(([t, x]) => {
  eq += `<text x="${x}" y="275" text-anchor="middle">${t}</text>`;
});
document.getElementById('eqGraph').innerHTML = eq;

// Dynamics curve
let dyn = `<rect x="49" y="11" width="252" height="240" fill="#000" stroke="#2f5a58"/>
  <path fill="#14312f" d="M49 248H101C107 170 118 11 136 11H216C240 14 268 110 301 186V251H49z"/>`;
[81, 112, 143, 175, 206, 238, 269].forEach(x => { dyn += `<path d="M${x} 11V251" stroke="#2c5250"/>`; });
[51, 91, 131, 171, 211].forEach(y => { dyn += `<path d="M49 ${y}H301" stroke="#2c5250"/>`; });
dyn += `<path d="M120 11V248M226 11V248" stroke="#b5702a" stroke-width="2"/>
  <path fill="none" stroke="#62cfd6" stroke-width="2" d="M52 248H101C107 170 118 11 136 11H216C240 14 268 110 301 186"/>`;
['0', '-3', '-6', '-9', '-12', '-15', '-18'].forEach((t, i) => {
  dyn += `<text x="40" y="${[20, 57, 97, 137, 177, 217, 252][i]}" text-anchor="end">${t}</text>`;
});
[['-80', 54], ['-60', 109], ['-40', 174], ['-20', 235], ['0', 297]].forEach(([t, x]) => {
  dyn += `<text x="${x}" y="275" text-anchor="middle">${t}</text>`;
});
document.getElementById('dynGraph').innerHTML = dyn;
```
